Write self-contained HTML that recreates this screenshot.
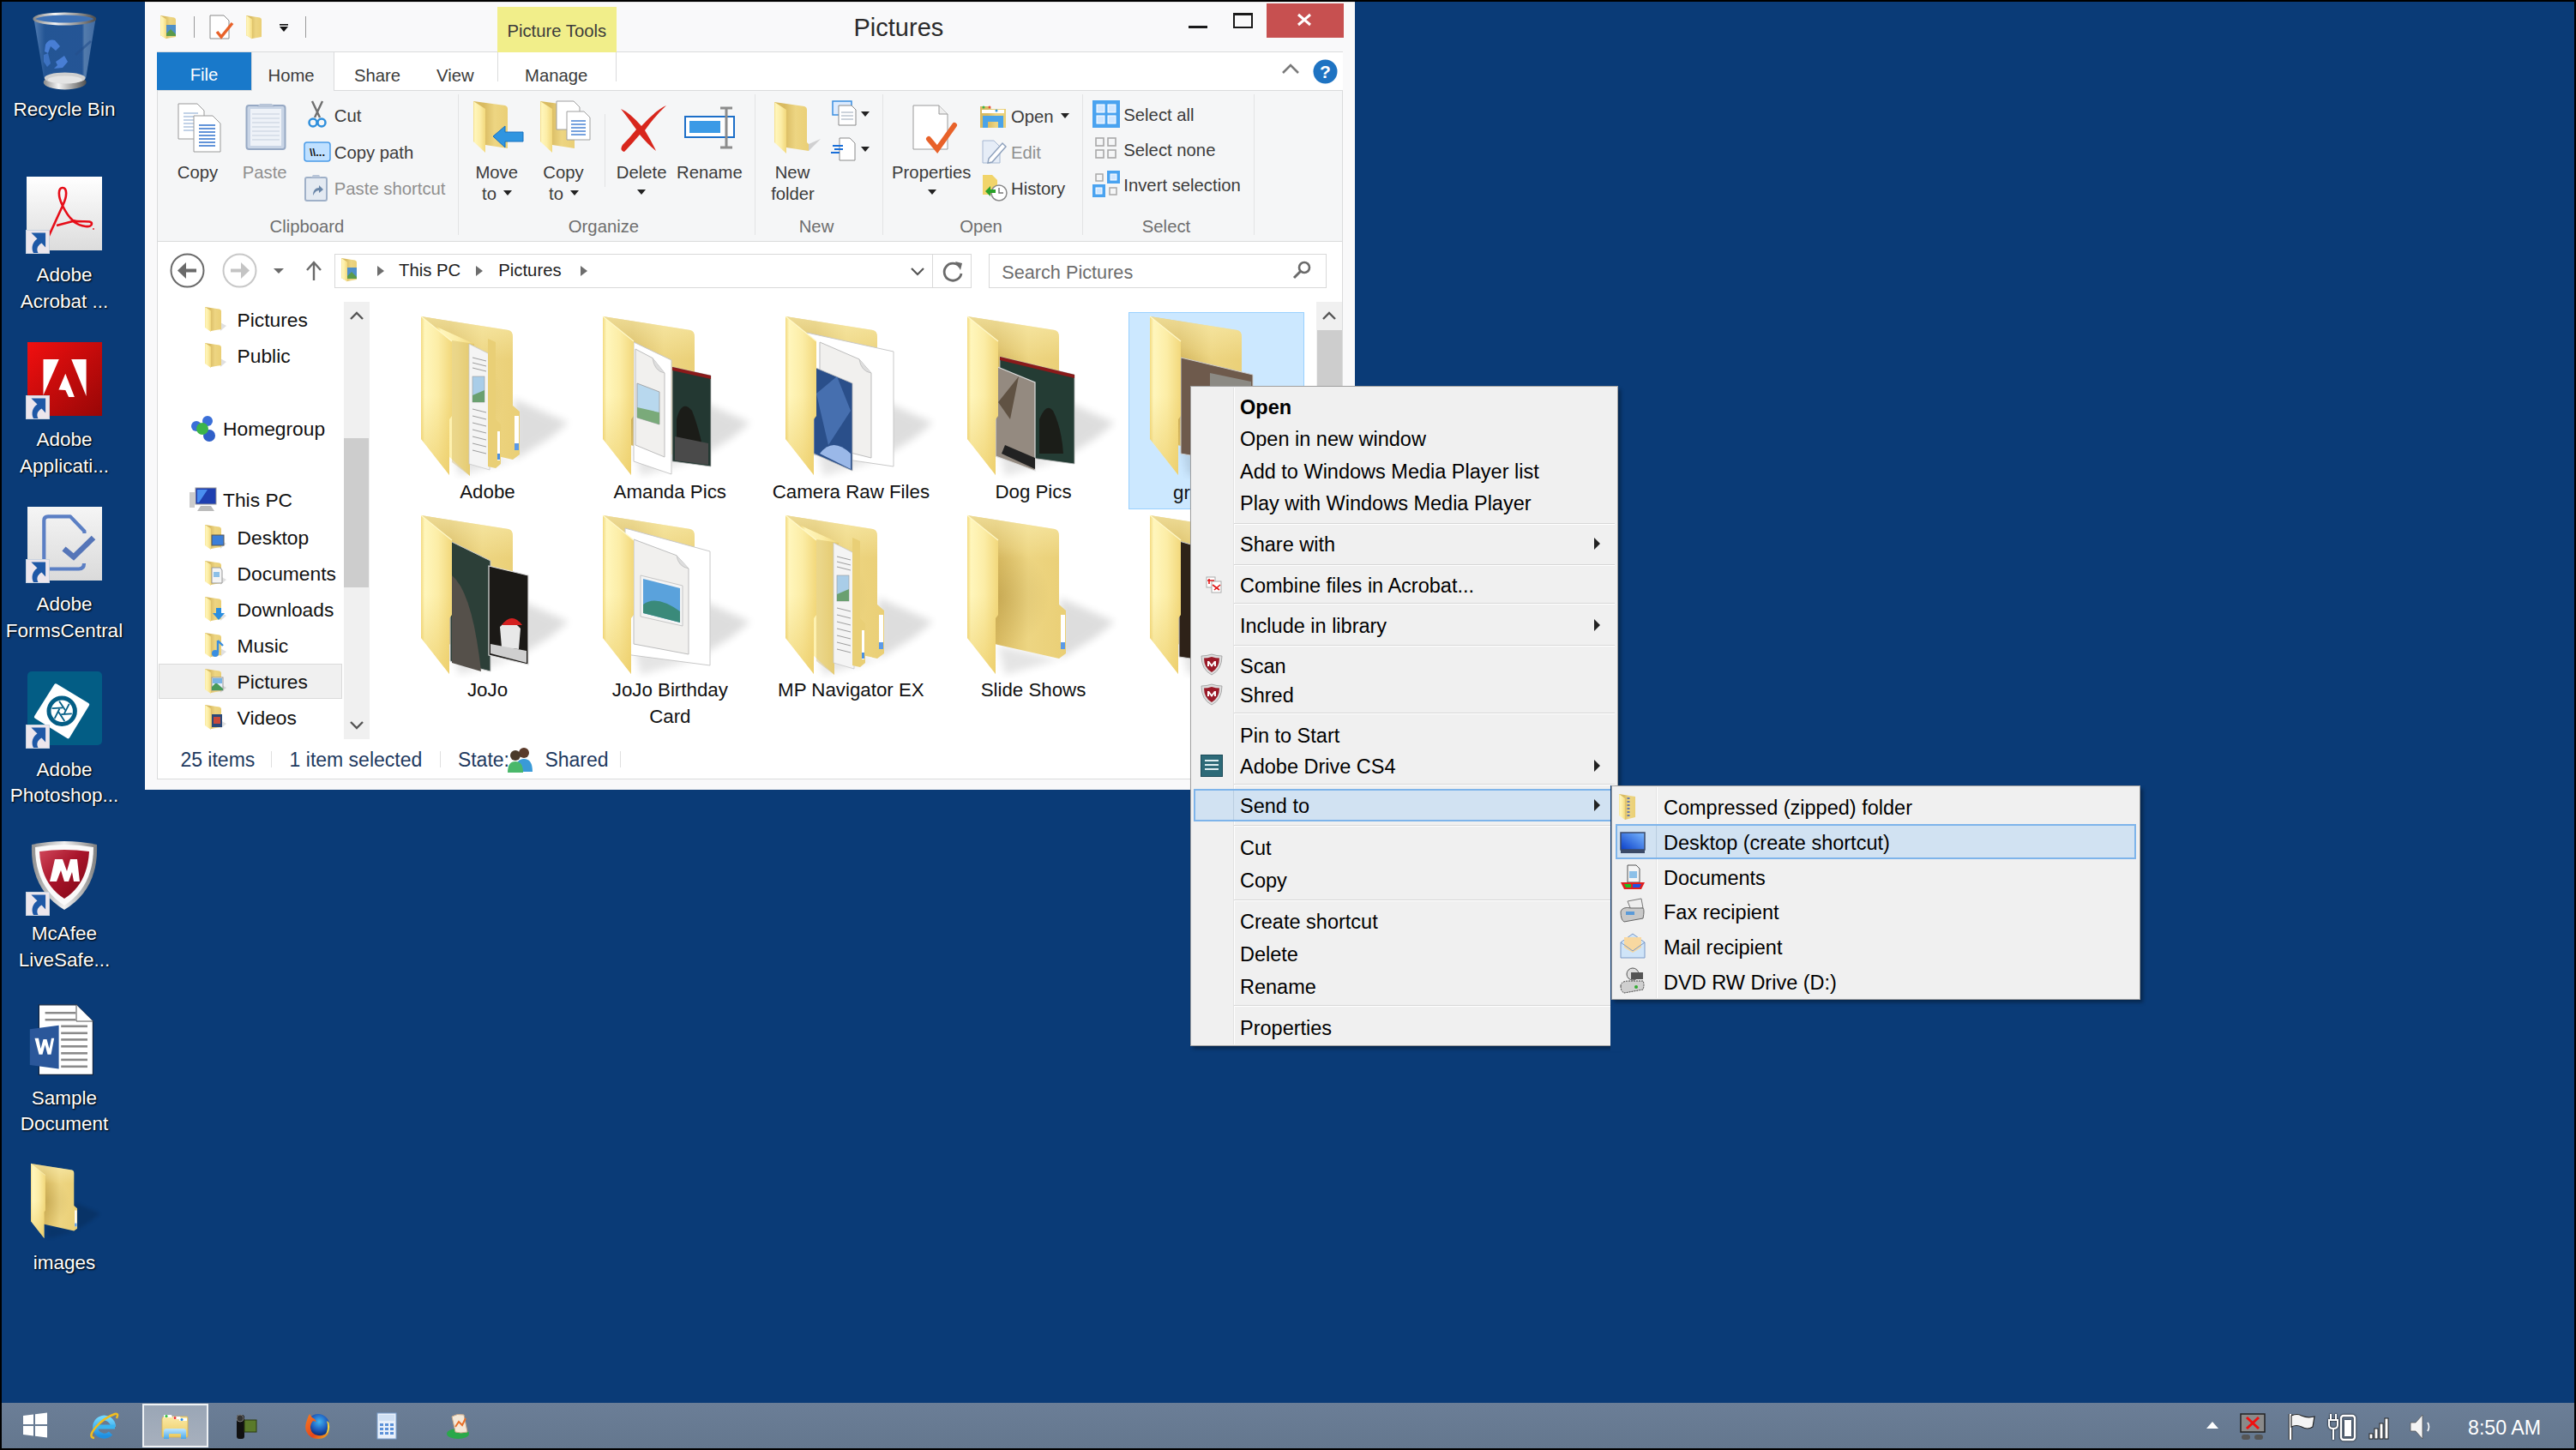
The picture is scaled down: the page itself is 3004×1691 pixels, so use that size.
<!DOCTYPE html>
<html><head><meta charset="utf-8"><style>
html,body{margin:0;padding:0;}
body{width:3004px;height:1691px;overflow:hidden;background:#000;position:relative;font-family:"Liberation Sans", sans-serif;}
div{position:absolute;box-sizing:border-box;}
.t{white-space:nowrap;}
svg{position:absolute;overflow:visible;}
</style></head><body>
<div class="" style="left:2px;top:2px;width:3000px;height:1634px;background:#0A3B77;"></div>
<svg style="left:37px;top:12px" width="78" height="96" viewBox="0 0 78 96">
<defs><linearGradient id="rbm" x1="0" x2="1"><stop offset="0" stop-color="#8a8a8a"/><stop offset=".35" stop-color="#f4f4f4"/><stop offset=".7" stop-color="#9a9a9a"/><stop offset="1" stop-color="#505050"/></linearGradient>
<linearGradient id="rbb" x1="0" x2="1"><stop offset="0" stop-color="#8fb6e6" stop-opacity=".55"/><stop offset=".18" stop-color="#3d6fb2" stop-opacity=".5"/><stop offset=".78" stop-color="#3a6aae" stop-opacity=".55"/><stop offset=".82" stop-color="#8fb0d8" stop-opacity=".55"/><stop offset="1" stop-color="#7a9ccc" stop-opacity=".5"/></linearGradient></defs>
<path d="M2.5 10 L14 78.4 Q38.5 86 63.3 78.4 L74.5 10 Z" fill="url(#rbb)"/>
<path d="M51 52 L69 36" stroke="#244f8c" stroke-width="3" opacity=".6"/>
<g fill="#4f86e0" opacity=".85"><path d="M16 40 Q20 33 27 35 L33 42 L28 47 L22 42 L19 50 L15 48Z"/><path d="M14 52 L19 50 L22 62 L18 66 L14 60Z" opacity=".7"/><path d="M28 60 L38 53 L42 60 L36 67 L26 68 L30 64Z"/></g>
<ellipse cx="38.7" cy="84" rx="25" ry="8.5" fill="url(#rbm)"/>
<ellipse cx="38.7" cy="79" rx="24" ry="6.5" fill="#cfcfcf"/>
<ellipse cx="38.7" cy="81" rx="20" ry="4.5" fill="#e4e4e4"/>
<ellipse cx="38.3" cy="10" rx="35.5" ry="6" fill="#3f72b6" stroke="url(#rbm)" stroke-width="3"/>
</svg>
<div class="t" style="top:116.66px;font-size:22.5px;line-height:22.5px;color:#fff;left:-225px;width:600px;text-align:center;text-shadow:1px 1px 2px #000,0 0 2px rgba(0,0,0,.6);">Recycle Bin</div>
<svg style="left:31px;top:206px" width="88" height="86" viewBox="0 0 88 86">
<defs><linearGradient id="acg" x1="0" y1="0" x2="0" y2="1"><stop offset="0" stop-color="#ffffff"/><stop offset="1" stop-color="#dcdcdc"/></linearGradient></defs>
<rect width="88" height="86" fill="url(#acg)"/>
<path d="M26 69 L42 34 C36 22 37 13 42 13 C47 13 48 22 42 34 C46 42 50 48 54 51 C62 54 76 50 76 55 C76 60 64 59 54 52 L35 57" fill="none" stroke="#E60D18" stroke-width="2.6" stroke-linejoin="round"/><circle cx="78" cy="61" r=".9" fill="#E60D18"/>
</svg>
<svg style="left:30px;top:268px" width="28" height="28" viewBox="0 0 28 28"><rect x="0.5" y="0.5" width="27" height="27" fill="#ECE6EC" stroke="#C9D3E0"/><path d="M6.4 3.4 L23.1 3.4 L23.1 20.5 L18.5 15.5 C13 19 12.5 23 14.5 27 L9 27 C6 21 8 14 13.5 10.5 Z" fill="#1E58A6"/></svg>
<div class="t" style="top:310.15px;font-size:22.5px;line-height:22.5px;color:#fff;left:-225px;width:600px;text-align:center;text-shadow:1px 1px 2px #000,0 0 2px rgba(0,0,0,.6);">Adobe</div>
<div class="t" style="top:341.15px;font-size:22.5px;line-height:22.5px;color:#fff;left:-225px;width:600px;text-align:center;text-shadow:1px 1px 2px #000,0 0 2px rgba(0,0,0,.6);">Acrobat ...</div>
<svg style="left:32px;top:399px" width="87" height="86" viewBox="0 0 87 86">
<defs><linearGradient id="aag" x1="0" y1="0" x2="1" y2="1"><stop offset="0" stop-color="#F20F0F"/><stop offset="1" stop-color="#970707"/></linearGradient></defs>
<rect width="87" height="86" fill="url(#aag)"/>
<path d="M18.5 20 L36.8 20 L18.5 62Z M51.2 20 L68.6 20 L68.6 63Z M44.3 36.8 L54.9 64 L48.1 64 L44.3 56 L36.4 55.5Z" fill="#fff"/>
</svg>
<svg style="left:30px;top:461px" width="28" height="28" viewBox="0 0 28 28"><rect x="0.5" y="0.5" width="27" height="27" fill="#ECE6EC" stroke="#C9D3E0"/><path d="M6.4 3.4 L23.1 3.4 L23.1 20.5 L18.5 15.5 C13 19 12.5 23 14.5 27 L9 27 C6 21 8 14 13.5 10.5 Z" fill="#1E58A6"/></svg>
<div class="t" style="top:502.15px;font-size:22.5px;line-height:22.5px;color:#fff;left:-225px;width:600px;text-align:center;text-shadow:1px 1px 2px #000,0 0 2px rgba(0,0,0,.6);">Adobe</div>
<div class="t" style="top:533.15px;font-size:22.5px;line-height:22.5px;color:#fff;left:-225px;width:600px;text-align:center;text-shadow:1px 1px 2px #000,0 0 2px rgba(0,0,0,.6);">Applicati...</div>
<svg style="left:32px;top:591px" width="87" height="86" viewBox="0 0 87 86">
<defs><linearGradient id="fcg" x1="0" y1="0" x2="0" y2="1"><stop offset="0" stop-color="#F5F5F5"/><stop offset="1" stop-color="#DADADA"/></linearGradient></defs>
<rect width="87" height="86" fill="url(#fcg)"/>
<path d="M66.4 31 L66.4 28.5 L50 11.4 L24 11.4 Q19.3 11.4 19.3 16 L19.3 72.5 L60 72.5 Q66 72.5 66 66" fill="none" stroke="#5B7FC4" stroke-width="4.2" stroke-linejoin="round"/>
<path d="M42.5 49 L53.9 58.5 L77 36" fill="none" stroke="#5575B8" stroke-width="6.5"/>
</svg>
<svg style="left:30px;top:652px" width="28" height="28" viewBox="0 0 28 28"><rect x="0.5" y="0.5" width="27" height="27" fill="#ECE6EC" stroke="#C9D3E0"/><path d="M6.4 3.4 L23.1 3.4 L23.1 20.5 L18.5 15.5 C13 19 12.5 23 14.5 27 L9 27 C6 21 8 14 13.5 10.5 Z" fill="#1E58A6"/></svg>
<div class="t" style="top:694.15px;font-size:22.5px;line-height:22.5px;color:#fff;left:-225px;width:600px;text-align:center;text-shadow:1px 1px 2px #000,0 0 2px rgba(0,0,0,.6);">Adobe</div>
<div class="t" style="top:725.15px;font-size:22.5px;line-height:22.5px;color:#fff;left:-225px;width:600px;text-align:center;text-shadow:1px 1px 2px #000,0 0 2px rgba(0,0,0,.6);">FormsCentral</div>
<svg style="left:32px;top:783px" width="87" height="86" viewBox="0 0 87 86">
<rect width="87" height="86" rx="5" fill="#035D85"/>
<path d="M33 16.3 L70.2 38.7 L47.4 76.3 L9.9 53.1 Z" fill="#fff" stroke="#fff" stroke-width="4" stroke-linejoin="round"/>
<circle cx="40.2" cy="46.3" r="15.2" fill="#fff" stroke="#035D85" stroke-width="5"/>
<g stroke="#035D85" stroke-width="1.8"><line x1="39.2" y1="50.2" x2="51.8" y2="49.4"/><line x1="36.3" y1="47.3" x2="43.3" y2="57.9"/><line x1="37.4" y1="43.5" x2="31.7" y2="54.8"/><line x1="41.2" y1="42.4" x2="28.6" y2="43.2"/><line x1="44.1" y1="45.3" x2="37.1" y2="34.7"/><line x1="43.0" y1="49.1" x2="48.7" y2="37.8"/></g>
</svg>
<svg style="left:30px;top:845px" width="28" height="28" viewBox="0 0 28 28"><rect x="0.5" y="0.5" width="27" height="27" fill="#ECE6EC" stroke="#C9D3E0"/><path d="M6.4 3.4 L23.1 3.4 L23.1 20.5 L18.5 15.5 C13 19 12.5 23 14.5 27 L9 27 C6 21 8 14 13.5 10.5 Z" fill="#1E58A6"/></svg>
<div class="t" style="top:887.15px;font-size:22.5px;line-height:22.5px;color:#fff;left:-225px;width:600px;text-align:center;text-shadow:1px 1px 2px #000,0 0 2px rgba(0,0,0,.6);">Adobe</div>
<div class="t" style="top:917.15px;font-size:22.5px;line-height:22.5px;color:#fff;left:-225px;width:600px;text-align:center;text-shadow:1px 1px 2px #000,0 0 2px rgba(0,0,0,.6);">Photoshop...</div>
<svg style="left:35px;top:979px" width="82" height="84" viewBox="0 0 82 84">
<defs><linearGradient id="mcs" x1="0" x2="1"><stop offset="0" stop-color="#8f8f8f"/><stop offset=".5" stop-color="#f0f0f0"/><stop offset="1" stop-color="#7f7f7f"/></linearGradient>
<linearGradient id="mcr" x1="0" y1="0" x2="1" y2="1"><stop offset="0" stop-color="#D0475A"/><stop offset=".45" stop-color="#A8142A"/><stop offset="1" stop-color="#7E0715"/></linearGradient></defs>
<path d="M2 6 Q40 -2 78 6 Q80 58 40 82 Q0 58 2 6Z" fill="url(#mcs)"/>
<path d="M6 9 Q40 3 74 9 Q74 55 40 77 Q6 55 6 9Z" fill="#fafafa"/>
<path d="M11 14 Q40 10 69 14 Q67 52 40 69 Q13 52 11 14Z" fill="url(#mcr)"/>
<path d="M23 49 L29 23 L38 23 L43 37 L47 23 L55 23 L58 49 L51 49 L49 38 L45 49 L40 49 L36 36 L31 49Z" fill="#fff"/>
</svg>
<svg style="left:30px;top:1040px" width="28" height="28" viewBox="0 0 28 28"><rect x="0.5" y="0.5" width="27" height="27" fill="#ECE6EC" stroke="#C9D3E0"/><path d="M6.4 3.4 L23.1 3.4 L23.1 20.5 L18.5 15.5 C13 19 12.5 23 14.5 27 L9 27 C6 21 8 14 13.5 10.5 Z" fill="#1E58A6"/></svg>
<div class="t" style="top:1078.15px;font-size:22.5px;line-height:22.5px;color:#fff;left:-225px;width:600px;text-align:center;text-shadow:1px 1px 2px #000,0 0 2px rgba(0,0,0,.6);">McAfee</div>
<div class="t" style="top:1109.15px;font-size:22.5px;line-height:22.5px;color:#fff;left:-225px;width:600px;text-align:center;text-shadow:1px 1px 2px #000,0 0 2px rgba(0,0,0,.6);">LiveSafe...</div>
<svg style="left:34px;top:1171px" width="76" height="84" viewBox="0 0 76 84">
<path d="M11.4 0.8 L55 0.8 L74.4 20 L74.4 82.3 L11.4 82.3Z" fill="#fff" stroke="#13243f" stroke-width="1.2"/>
<path d="M55 0.8 L55 20 L74.4 20" fill="#fff" stroke="#555" stroke-width="1"/>
<g stroke="#8a8a8a" stroke-width="2.6"><line x1="18.6" y1="10.2" x2="54.3" y2="10.2"/><line x1="18.6" y1="18.2" x2="54.3" y2="18.2"/><line x1="37.2" y1="25.8" x2="68" y2="25.8"/><line x1="37.2" y1="33.8" x2="68" y2="33.8"/><line x1="37.2" y1="41.4" x2="68" y2="41.4"/><line x1="37.2" y1="49.3" x2="68" y2="49.3"/><line x1="37.2" y1="57.3" x2="68" y2="57.3"/><line x1="37.2" y1="64.9" x2="68" y2="64.9"/><line x1="37.2" y1="72.8" x2="68" y2="72.8"/></g>
<path d="M0.8 29.2 L34.6 24.7 L34.6 75.5 L0.8 71Z" fill="#2B579A"/>
<path d="M6.5 39.8 L11 39.8 L13.5 52 L16.5 41 L20.5 41 L23.5 52 L26 39.8 L29.2 39.8 L25.5 58.8 L21.5 58.8 L18.5 47.5 L15.5 58.8 L11.5 58.8 Z" fill="#fff"/>
</svg>
<div class="t" style="top:1270.15px;font-size:22.5px;line-height:22.5px;color:#fff;left:-225px;width:600px;text-align:center;text-shadow:1px 1px 2px #000,0 0 2px rgba(0,0,0,.6);">Sample</div>
<div class="t" style="top:1300.15px;font-size:22.5px;line-height:22.5px;color:#fff;left:-225px;width:600px;text-align:center;text-shadow:1px 1px 2px #000,0 0 2px rgba(0,0,0,.6);">Document</div>
<div class="" style="left:169px;top:2px;width:1411px;height:919px;background:#F9F9FA;border-top:1px solid #E4E4E4;"></div>
<div class="" style="left:183px;top:60px;width:1383px;height:45px;background:#fff;border-top:1px solid #DADBDC;"></div>
<div class="" style="left:183px;top:105px;width:1383px;height:177px;background:#F5F6F7;border-top:1px solid #DADBDC;border-bottom:1px solid #DADBDC;border-left:1px solid #DADBDC;border-right:1px solid #DADBDC;"></div>
<div class="" style="left:183px;top:61px;width:110px;height:44px;background:#1979CA;"></div>
<div class="t" style="top:76.72px;font-size:20.3px;line-height:20.3px;color:#fff;left:-62px;width:600px;text-align:center;">File</div>
<div class="" style="left:293px;top:61px;width:97px;height:45px;background:#F5F6F7;border-left:1px solid #DADBDC;border-right:1px solid #DADBDC;"></div>
<div class="t" style="top:78.12px;font-size:20.3px;line-height:20.3px;color:#3B3B3B;left:39.60000000000002px;width:600px;text-align:center;">Home</div>
<div class="t" style="top:78.12px;font-size:20.3px;line-height:20.3px;color:#3B3B3B;left:413px;">Share</div>
<div class="t" style="top:78.12px;font-size:20.3px;line-height:20.3px;color:#3B3B3B;left:509px;">View</div>
<div class="" style="left:580px;top:8px;width:139px;height:53px;background:#F1EE8A;"></div>
<div class="t" style="top:25.92px;font-size:20.3px;line-height:20.3px;color:#3B3B3B;left:591.4px;">Picture Tools</div>
<div class="" style="left:580px;top:61px;width:1px;height:34px;background:#DADBDC;"></div>
<div class="" style="left:718px;top:61px;width:1px;height:34px;background:#DADBDC;"></div>
<div class="t" style="top:78.12px;font-size:20.3px;line-height:20.3px;color:#3B3B3B;left:612px;">Manage</div>
<div class="t" style="top:17.82px;font-size:29px;line-height:29px;color:#2B2B2B;left:995.5px;">Pictures</div>
<div class="" style="left:1386px;top:30px;width:22px;height:3px;background:#1a1a1a;"></div>
<div class="" style="left:1438px;top:15px;width:23px;height:18px;border:2px solid #1a1a1a;border-top-width:3px;"></div>
<div class="" style="left:1477px;top:4px;width:90px;height:40px;background:#C75050;"></div>
<svg style="left:1512px;top:16px" width="18" height="14" viewBox="0 0 18 14"><path d="M2 1 L16 13 M16 1 L2 13" stroke="#fff" stroke-width="3"/></svg>
<svg style="left:1495px;top:74px" width="20" height="12" viewBox="0 0 20 12"><path d="M1 11 L10 2 L19 11" stroke="#7a7a7a" stroke-width="2.6" fill="none"/></svg>
<svg style="left:1531px;top:69px" width="29" height="29" viewBox="0 0 29 29"><circle cx="14.5" cy="14.5" r="14" fill="#1E73C2"/><text x="14.5" y="22" font-family="Liberation Sans" font-weight="700" font-size="21" fill="#fff" text-anchor="middle">?</text></svg>
<svg style="left:185px;top:17px" width="22" height="29" viewBox="0 0 22 29"><path d="M2 1 L18 3.5 Q20 4 20 6 L20 26 L9 28 L2 24Z" fill="url(#fback)"/><path d="M2 1 L9 5.5 L9 28.5 L2 24Z" fill="url(#ffront)"/><rect x="9" y="12" width="11" height="13" fill="#4f8fc8"/><path d="M9 22 L14 17 L20 23 L20 25 L9 25Z" fill="#5a9a4a"/></svg>
<div class="" style="left:226px;top:19px;width:1px;height:25px;background:#9a9a9a;"></div>
<svg style="left:244px;top:17px" width="30" height="30" viewBox="0 0 30 30"><path d="M1 1 L17 1 L23 7 L23 28 L1 28Z" fill="#fff" stroke="#8a8a8a"/><path d="M9 20 L14 26 L27 10" stroke="#E8622A" stroke-width="3.5" fill="none"/></svg>
<svg style="left:285px;top:17px" width="22" height="29" viewBox="0 0 22 29"><path d="M2 1 L18 3.5 Q20 4 20 6 L20 26 L9 28 L2 24Z" fill="url(#fback)"/><path d="M2 1 L9 5.5 L9 28.5 L2 24Z" fill="url(#ffront)"/></svg>
<svg style="left:325px;top:28px" width="12" height="10" viewBox="0 0 12 10"><rect x="1" y="0" width="10" height="1.6" fill="#111"/><path d="M1 3 L11 3 L6 9Z" fill="#111"/></svg>
<div class="" style="left:356px;top:19px;width:1px;height:25px;background:#9a9a9a;"></div>
<div class="" style="left:534px;top:110px;width:1px;height:164px;background:#E2E3E4;"></div>
<div class="" style="left:880px;top:110px;width:1px;height:164px;background:#E2E3E4;"></div>
<div class="" style="left:1029px;top:110px;width:1px;height:164px;background:#E2E3E4;"></div>
<div class="" style="left:1262px;top:110px;width:1px;height:164px;background:#E2E3E4;"></div>
<div class="" style="left:1462px;top:110px;width:1px;height:164px;background:#E2E3E4;"></div>
<div class="t" style="top:253.82px;font-size:20.3px;line-height:20.3px;color:#6E6E6E;left:58px;width:600px;text-align:center;">Clipboard</div>
<div class="t" style="top:253.82px;font-size:20.3px;line-height:20.3px;color:#6E6E6E;left:404px;width:600px;text-align:center;">Organize</div>
<div class="t" style="top:253.82px;font-size:20.3px;line-height:20.3px;color:#6E6E6E;left:652px;width:600px;text-align:center;">New</div>
<div class="t" style="top:253.82px;font-size:20.3px;line-height:20.3px;color:#6E6E6E;left:844px;width:600px;text-align:center;">Open</div>
<div class="t" style="top:253.82px;font-size:20.3px;line-height:20.3px;color:#6E6E6E;left:1060px;width:600px;text-align:center;">Select</div>
<svg style="left:207px;top:120px" width="52" height="58" viewBox="0 0 52 58">
<path d="M1 1 L23 1 L31 9 L31 42 L1 42Z" fill="#fff" stroke="#9a9a9a"/>
<g stroke="#9ab4d8" stroke-width="1.2"><line x1="7" y1="12" x2="24" y2="12"/><line x1="7" y1="16" x2="24" y2="16"/><line x1="7" y1="20" x2="24" y2="20"/><line x1="7" y1="24" x2="24" y2="24"/><line x1="7" y1="28" x2="24" y2="28"/><line x1="7" y1="32" x2="24" y2="32"/></g>
<path d="M19 15 L41 15 L50 24 L50 57 L19 57Z" fill="#fff" stroke="#9a9a9a"/>
<g stroke="#3d7ad0" stroke-width="1.6"><line x1="25" y1="26" x2="44" y2="26"/><line x1="25" y1="30" x2="44" y2="30"/><line x1="25" y1="34" x2="44" y2="34"/><line x1="25" y1="38" x2="44" y2="38"/><line x1="25" y1="42" x2="44" y2="42"/><line x1="25" y1="46" x2="44" y2="46"/><line x1="25" y1="50" x2="44" y2="50"/></g>
</svg>
<div class="t" style="top:191.02px;font-size:20.3px;line-height:20.3px;color:#3B3B3B;left:-69.5px;width:600px;text-align:center;">Copy</div>
<svg style="left:286px;top:119px" width="48" height="57" viewBox="0 0 48 57">
<rect x="1.5" y="4" width="45" height="51" rx="3" fill="#c9d5e6" stroke="#97a9c4" stroke-width="2"/>
<rect x="6" y="8" width="36" height="43" fill="#eef2f8"/>
<g stroke="#c5cfdd" stroke-width="1"><line x1="8" y1="14" x2="40" y2="14"/><line x1="8" y1="19" x2="40" y2="19"/><line x1="8" y1="24" x2="40" y2="24"/><line x1="8" y1="29" x2="40" y2="29"/><line x1="8" y1="34" x2="40" y2="34"/><line x1="8" y1="39" x2="40" y2="39"/><line x1="8" y1="44" x2="40" y2="44"/></g>
<path d="M14 6 L34 6 L31 2 L17 2Z" fill="#b8c5d8"/>
</svg>
<div class="t" style="top:191.02px;font-size:20.3px;line-height:20.3px;color:#8F8F8F;left:8.699999999999989px;width:600px;text-align:center;">Paste</div>
<svg style="left:359px;top:118px" width="22" height="32" viewBox="0 0 22 32">
<path d="M5 0 L14 19 M17 0 L8 19" stroke="#6f6f6f" stroke-width="2.4"/>
<circle cx="6" cy="25" r="4.5" fill="none" stroke="#2f8fdc" stroke-width="2.5"/><circle cx="16" cy="25" r="4.5" fill="none" stroke="#2f8fdc" stroke-width="2.5"/>
</svg>
<div class="t" style="top:125.42px;font-size:20.3px;line-height:20.3px;color:#3B3B3B;left:389.8px;">Cut</div>
<svg style="left:354px;top:165px" width="32" height="24" viewBox="0 0 32 24">
<rect x="1" y="1" width="30" height="22" rx="3" fill="#bfe0ff" stroke="#4a9be8" stroke-width="1.5"/>
<text x="16" y="17" font-family="Liberation Sans" font-weight="700" font-size="13" fill="#111" text-anchor="middle">\\...</text>
</svg>
<div class="t" style="top:167.92px;font-size:20.3px;line-height:20.3px;color:#3B3B3B;left:389.8px;">Copy path</div>
<svg style="left:355px;top:204px" width="27" height="31" viewBox="0 0 27 31">
<rect x="1" y="3" width="25" height="27" rx="2" fill="#e4eaf2" stroke="#9fb0c8" stroke-width="2"/>
<path d="M8 3 L19 3 L17 0 L10 0Z" fill="#b8c5d8"/>
<path d="M10 24 C10 18 13 15 17 15 L17 12 L22 17 L17 21 L17 18 C14 18 12 20 10 24Z" fill="#6a86a8"/>
</svg>
<div class="t" style="top:210.42px;font-size:20.3px;line-height:20.3px;color:#8F8F8F;left:389.8px;">Paste shortcut</div>
<svg style="left:551px;top:117px" width="60" height="62" viewBox="0 0 60 62">
<path d="M1 1 L38 6 Q41 7 41 10 L41 56 L15 52Z" fill="url(#fback)"/><path d="M1 1 L15 10 L15 61 L1 48Z" fill="url(#ffront)"/>
<path d="M24 42 L38 30 L38 37 L59 37 L59 48 L38 48 L38 55Z" fill="#2F95E0" stroke="#1870c0" stroke-width="1"/>
</svg>
<div class="t" style="top:191.02px;font-size:20.3px;line-height:20.3px;color:#3B3B3B;left:279.20000000000005px;width:600px;text-align:center;">Move</div>
<div class="t" style="top:216.22px;font-size:20.3px;line-height:20.3px;color:#3B3B3B;left:270.5px;width:600px;text-align:center;">to</div>
<svg style="left:587px;top:222px" width="10" height="6" viewBox="0 0 10 6"><path d="M0 0 L10 0 L5 6Z" fill="#222"/></svg>
<svg style="left:629px;top:117px" width="62" height="62" viewBox="0 0 62 62">
<path d="M1 1 L38 6 Q41 7 41 10 L41 56 L15 52Z" fill="url(#fback)"/><path d="M1 1 L15 10 L15 61 L1 48Z" fill="url(#ffront)"/>
<path d="M20 1 L40 1 L47 8 L47 34 L20 34Z" fill="#fff" stroke="#a0a0a0"/>
<path d="M32 13 L52 13 L59 20 L59 46 L32 46Z" fill="#fff" stroke="#a0a0a0"/>
<g stroke="#3d7ad0" stroke-width="1.4"><line x1="37" y1="24" x2="54" y2="24"/><line x1="37" y1="28" x2="54" y2="28"/><line x1="37" y1="32" x2="54" y2="32"/><line x1="37" y1="36" x2="54" y2="36"/><line x1="37" y1="40" x2="54" y2="40"/></g>
</svg>
<div class="t" style="top:191.02px;font-size:20.3px;line-height:20.3px;color:#3B3B3B;left:357px;width:600px;text-align:center;">Copy</div>
<div class="t" style="top:216.22px;font-size:20.3px;line-height:20.3px;color:#3B3B3B;left:348.5px;width:600px;text-align:center;">to</div>
<svg style="left:665px;top:222px" width="10" height="6" viewBox="0 0 10 6"><path d="M0 0 L10 0 L5 6Z" fill="#222"/></svg>
<div class="" style="left:705px;top:133px;width:1px;height:85px;background:#E2E3E4;"></div>
<svg style="left:720px;top:121px" width="58" height="57" viewBox="0 0 58 57">
<path d="M4 6 Q14 10 28 26 Q44 8 57 2 Q44 14 32 31 Q40 44 45 55 Q36 48 26 36 Q14 50 8 56 Q2 54 6 48 Q14 40 22 30 Q12 16 4 6Z" fill="#d8261c"/>
</svg>
<div class="t" style="top:191.02px;font-size:20.3px;line-height:20.3px;color:#3B3B3B;left:448.20000000000005px;width:600px;text-align:center;">Delete</div>
<svg style="left:743px;top:221px" width="10" height="6" viewBox="0 0 10 6"><path d="M0 0 L10 0 L5 6Z" fill="#222"/></svg>
<svg style="left:798px;top:125px" width="60" height="48" viewBox="0 0 60 48">
<rect x="1" y="11" width="57" height="24" fill="#fff" stroke="#1d6fc8" stroke-width="2"/>
<rect x="6" y="16" width="36" height="14" fill="#3a9ae6"/>
<path d="M42 1 L56 1 M49 1 L49 47 M42 47 L56 47" stroke="#8c8c8c" stroke-width="3"/>
</svg>
<div class="t" style="top:191.02px;font-size:20.3px;line-height:20.3px;color:#3B3B3B;left:527.4px;width:600px;text-align:center;">Rename</div>
<svg style="left:902px;top:118px" width="56" height="62" viewBox="0 0 56 62">
<path d="M1 1 L36 6 Q39 7 39 10 L39 48 L41 50 L41 58 L15 54Z" fill="url(#fback)"/><path d="M1 1 L15 10 L15 61 L1 48Z" fill="url(#ffront)"/>
<path d="M41 50 L55 44 L41 58Z" fill="#999" opacity=".4"/>
</svg>
<div class="t" style="top:191.02px;font-size:20.3px;line-height:20.3px;color:#3B3B3B;left:624px;width:600px;text-align:center;">New</div>
<div class="t" style="top:216.22px;font-size:20.3px;line-height:20.3px;color:#3B3B3B;left:624.5px;width:600px;text-align:center;">folder</div>
<svg style="left:970px;top:117px" width="30" height="30" viewBox="0 0 30 30">
<rect x="1" y="1" width="22" height="16" fill="#dcebff" stroke="#3a8ee0" stroke-width="1.5"/>
<path d="M8 6 L23 6 L28 11 L28 29 L8 29Z" fill="#fff" stroke="#8a8a8a"/>
<g stroke="#9aa8b8"><line x1="11" y1="14" x2="25" y2="14"/><line x1="11" y1="18" x2="25" y2="18"/><line x1="11" y1="22" x2="25" y2="22"/></g>
</svg>
<svg style="left:1004px;top:130px" width="10" height="6" viewBox="0 0 10 6"><path d="M0 0 L10 0 L5 6Z" fill="#222"/></svg>
<svg style="left:969px;top:160px" width="30" height="28" viewBox="0 0 30 28">
<path d="M10 1 L22 1 L28 7 L28 27 L10 27Z" fill="#fff" stroke="#8a8a8a"/>
<path d="M2 10 L14 10 M4 14 L14 14 M0 18 L10 18" stroke="#1a6fd8" stroke-width="2"/>
</svg>
<svg style="left:1004px;top:171px" width="10" height="6" viewBox="0 0 10 6"><path d="M0 0 L10 0 L5 6Z" fill="#222"/></svg>
<svg style="left:1064px;top:122px" width="52" height="57" viewBox="0 0 52 57">
<path d="M1 1 L31 1 L41 11 L41 52 L1 52Z" fill="#fff" stroke="#9a9a9a"/><path d="M31 1 L31 11 L41 11" fill="#eee" stroke="#9a9a9a"/>
<path d="M19 40 L29 52 L49 24" stroke="#E8622A" stroke-width="6" fill="none" stroke-linecap="round"/>
</svg>
<div class="t" style="top:191.02px;font-size:20.3px;line-height:20.3px;color:#3B3B3B;left:786.3px;width:600px;text-align:center;">Properties</div>
<svg style="left:1082px;top:221px" width="10" height="6" viewBox="0 0 10 6"><path d="M0 0 L10 0 L5 6Z" fill="#222"/></svg>
<svg style="left:1142px;top:121px" width="32" height="30" viewBox="0 0 32 30">
<path d="M1 3 L12 3 L14 6 L31 6 L31 28 L1 28Z" fill="url(#fback)"/>
<rect x="3" y="7" width="26" height="4" fill="#fff"/>
<path d="M4 14 L28 14 L28 28 L22 28 L22 21 L10 21 L10 28 L4 28Z" fill="#4aa3e8"/>
<circle cx="5" cy="4" r="1.5" fill="#3bb54a"/><circle cx="12" cy="4" r="1.5" fill="#e74c3c"/><circle cx="20" cy="8" r="1.5" fill="#3498db"/>
</svg>
<div class="t" style="top:126.22px;font-size:20.3px;line-height:20.3px;color:#3B3B3B;left:1179px;">Open</div>
<svg style="left:1237px;top:132px" width="10" height="6" viewBox="0 0 10 6"><path d="M0 0 L10 0 L5 6Z" fill="#222"/></svg>
<svg style="left:1145px;top:163px" width="29" height="28" viewBox="0 0 29 28">
<path d="M1 1 L14 1 L21 8 L21 27 L1 27Z" fill="#e6edf7" stroke="#a6b8d2"/>
<path d="M8 22 L24 4 L28 8 L12 26 L7 27Z" fill="#fff" stroke="#8fa2bd" stroke-width="1.5"/>
</svg>
<div class="t" style="top:167.92px;font-size:20.3px;line-height:20.3px;color:#8F8F8F;left:1179px;">Edit</div>
<svg style="left:1145px;top:203px" width="30" height="32" viewBox="0 0 30 32">
<path d="M1 1 L12 1 L18 7 L18 24 L1 24Z" fill="#F1D46A"/>
<circle cx="20" cy="22" r="9" fill="#fff" stroke="#8a8a8a" stroke-width="1.5"/>
<path d="M20 16 L20 22 L25 22" stroke="#777" stroke-width="1.5" fill="none"/>
<path d="M4 20 L10 14 L10 18 L16 18 L16 22 L10 22 L10 26Z" fill="#2aa12a"/>
</svg>
<div class="t" style="top:210.42px;font-size:20.3px;line-height:20.3px;color:#3B3B3B;left:1179px;">History</div>
<svg style="left:1274px;top:117px" width="32" height="32" viewBox="0 0 32 32">
<rect width="32" height="32" fill="#4aa3f0"/>
<rect x="5" y="5" width="9" height="9" fill="#cfe6ff" stroke="#fff"/><rect x="18" y="5" width="9" height="9" fill="#cfe6ff" stroke="#fff"/>
<rect x="5" y="18" width="9" height="9" fill="#cfe6ff" stroke="#fff"/><rect x="18" y="18" width="9" height="9" fill="#cfe6ff" stroke="#fff"/>
</svg>
<div class="t" style="top:124.42px;font-size:20.3px;line-height:20.3px;color:#3B3B3B;left:1310.3px;">Select all</div>
<svg style="left:1277px;top:160px" width="27" height="27" viewBox="0 0 27 27" fill="none" stroke="#a8a8a8" stroke-width="1.6">
<rect x="1" y="1" width="9" height="9"/><rect x="15" y="1" width="9" height="9"/><rect x="1" y="15" width="9" height="9"/><rect x="15" y="15" width="9" height="9"/>
</svg>
<div class="t" style="top:165.02px;font-size:20.3px;line-height:20.3px;color:#3B3B3B;left:1310.3px;">Select none</div>
<svg style="left:1274px;top:199px" width="32" height="32" viewBox="0 0 32 32">
<rect x="17" y="0" width="15" height="15" fill="#4aa3f0"/><rect x="21" y="4" width="7" height="7" fill="#cfe6ff" stroke="#fff"/>
<rect x="0" y="16" width="15" height="15" fill="#4aa3f0"/><rect x="4" y="20" width="7" height="7" fill="#cfe6ff" stroke="#fff"/>
<rect x="4" y="4" width="8" height="8" fill="none" stroke="#a8a8a8" stroke-width="1.5"/><rect x="20" y="20" width="8" height="8" fill="none" stroke="#a8a8a8" stroke-width="1.5"/>
</svg>
<div class="t" style="top:205.62px;font-size:20.3px;line-height:20.3px;color:#3B3B3B;left:1310.3px;">Invert selection</div>
<div class="" style="left:183px;top:282px;width:1383px;height:70px;background:#fff;border-left:1px solid #DADBDC;border-right:1px solid #DADBDC;"></div>
<svg style="left:198px;top:295px" width="42" height="42" viewBox="0 0 42 42"><circle cx="20.5" cy="20.5" r="19" fill="none" stroke="#6a6a6a" stroke-width="2"/><path d="M13 20.5 L31 20.5" stroke="#6a6a6a" stroke-width="4"/><path d="M9 20.5 L19 11 L19 30Z" fill="#6a6a6a"/></svg>
<svg style="left:259px;top:295px" width="42" height="42" viewBox="0 0 42 42"><circle cx="20.5" cy="20.5" r="19" fill="none" stroke="#c8c8c8" stroke-width="2"/><path d="M10 20.5 L28 20.5" stroke="#c4c4c4" stroke-width="4"/><path d="M32 20.5 L22 11 L22 30Z" fill="#c4c4c4"/></svg>
<svg style="left:318px;top:312px" width="14" height="8" viewBox="0 0 14 8"><path d="M1 1 L13 1 L7 7Z" fill="#6a6a6a"/></svg>
<svg style="left:356px;top:304px" width="20" height="24" viewBox="0 0 20 24"><path d="M10 23 L10 3 M2 11 L10 2 L18 11" stroke="#6a6a6a" stroke-width="2.4" fill="none"/></svg>
<div class="" style="left:390px;top:296px;width:743px;height:40px;border:1px solid #D9D9D9;background:#fff;"></div>
<div class="" style="left:1087px;top:297px;width:1px;height:38px;background:#D9D9D9;"></div>
<svg style="left:396px;top:300px" width="22" height="29" viewBox="0 0 22 29"><path d="M2 1 L18 3.5 Q20 4 20 6 L20 26 L9 28 L2 24Z" fill="url(#fback)"/><path d="M2 1 L9 5.5 L9 28.5 L2 24Z" fill="url(#ffront)"/><rect x="9" y="12" width="11" height="13" fill="#4f8fc8"/><path d="M9 22 L14 17 L20 23 L20 25 L9 25Z" fill="#5a9a4a"/></svg>
<svg style="left:439px;top:309px" width="10" height="14" viewBox="0 0 10 14"><path d="M1 1 L9 7 L1 13Z" fill="#6d6d6d"/></svg>
<svg style="left:554px;top:309px" width="10" height="14" viewBox="0 0 10 14"><path d="M1 1 L9 7 L1 13Z" fill="#6d6d6d"/></svg>
<svg style="left:676px;top:309px" width="10" height="14" viewBox="0 0 10 14"><path d="M1 1 L9 7 L1 13Z" fill="#6d6d6d"/></svg>
<div class="t" style="top:305.42px;font-size:20.3px;line-height:20.3px;color:#1e1e1e;left:465px;">This PC</div>
<div class="t" style="top:305.42px;font-size:20.3px;line-height:20.3px;color:#1e1e1e;left:581.3px;">Pictures</div>
<svg style="left:1062px;top:312px" width="16" height="10" viewBox="0 0 16 10"><path d="M1 1 L8 8 L15 1" stroke="#555" stroke-width="2.2" fill="none"/></svg>
<svg style="left:1099px;top:303px" width="26" height="26" viewBox="0 0 26 26"><path d="M20 8 A10 10 0 1 0 22 16" stroke="#6a6a6a" stroke-width="2.8" fill="none"/><path d="M15 2 L23 4 L21 12Z" fill="#6a6a6a"/></svg>
<div class="" style="left:1153px;top:296px;width:394px;height:40px;border:1px solid #D9D9D9;background:#fff;"></div>
<div class="t" style="top:306.84px;font-size:21.7px;line-height:21.7px;color:#6D6D6D;left:1168.2px;">Search Pictures</div>
<svg style="left:1507px;top:304px" width="22" height="22" viewBox="0 0 22 22"><circle cx="14" cy="8" r="6" fill="none" stroke="#6a6a6a" stroke-width="2.6"/><path d="M10 12 L2 20" stroke="#6a6a6a" stroke-width="3"/></svg>
<div class="" style="left:183px;top:352px;width:1383px;height:557px;background:#fff;border-bottom:1px solid #DADBDC;border-left:1px solid #DADBDC;border-right:1px solid #DADBDC;"></div>
<svg style="left:238px;top:357px" width="26" height="31" viewBox="0 0 26 31"><path d="M19 19 L26 23 L19 29Z" fill="#000" opacity=".12"/><path d="M1 1 L18 3.5 Q20 4 20 6 L20 27 L8 29 L1 24Z" fill="url(#fback)"/><path d="M1 1 L8 5.5 L8 30 L1 25Z" fill="url(#ffront)"/></svg>
<div class="t" style="top:362.41px;font-size:22.8px;line-height:22.8px;color:#111;left:276.5px;">Pictures</div>
<svg style="left:238px;top:399px" width="26" height="31" viewBox="0 0 26 31"><path d="M19 19 L26 23 L19 29Z" fill="#000" opacity=".12"/><path d="M1 1 L18 3.5 Q20 4 20 6 L20 27 L8 29 L1 24Z" fill="url(#fback)"/><path d="M1 1 L8 5.5 L8 30 L1 25Z" fill="url(#ffront)"/></svg>
<div class="t" style="top:403.51px;font-size:22.8px;line-height:22.8px;color:#111;left:276.5px;">Public</div>
<svg style="left:220px;top:484px" width="34" height="32" viewBox="0 0 34 32">
<circle cx="9" cy="13" r="6" fill="#3a6fd8"/><circle cx="22" cy="7" r="6" fill="#3a6fd8"/><circle cx="24" cy="24" r="7" fill="#2f5fc8"/><circle cx="16" cy="16" r="7" fill="#3cb44a"/>
</svg>
<div class="t" style="top:489.41px;font-size:22.8px;line-height:22.8px;color:#111;left:260px;">Homegroup</div>
<svg style="left:220px;top:568px" width="34" height="30" viewBox="0 0 34 30">
<rect x="8" y="1" width="24" height="19" fill="#1f3fb0" stroke="#999"/><path d="M10 3 L22 3 L12 18 L10 18Z" fill="#4a8ef0"/>
<rect x="1" y="6" width="6" height="18" fill="#ccc"/><path d="M14 22 L26 22 L30 28 L10 28Z" fill="#bbb"/>
</svg>
<div class="t" style="top:572.21px;font-size:22.8px;line-height:22.8px;color:#111;left:260px;">This PC</div>
<svg style="left:238px;top:611px" width="26" height="31" viewBox="0 0 26 31"><path d="M19 19 L26 23 L19 29Z" fill="#000" opacity=".12"/><path d="M1 1 L18 3.5 Q20 4 20 6 L20 27 L8 29 L1 24Z" fill="url(#fback)"/><path d="M1 1 L8 5.5 L8 30 L1 25Z" fill="url(#ffront)"/><rect x="9" y="13" width="14" height="12" fill="#3c7fd8" stroke="#555"/></svg>
<div class="t" style="top:615.81px;font-size:22.8px;line-height:22.8px;color:#111;left:276.6px;">Desktop</div>
<svg style="left:238px;top:653px" width="26" height="31" viewBox="0 0 26 31"><path d="M19 19 L26 23 L19 29Z" fill="#000" opacity=".12"/><path d="M1 1 L18 3.5 Q20 4 20 6 L20 27 L8 29 L1 24Z" fill="url(#fback)"/><path d="M1 1 L8 5.5 L8 30 L1 25Z" fill="url(#ffront)"/><path d="M9 9 L19 9 L21 12 L21 27 L9 27Z" fill="#f4f4f4" stroke="#999"/><rect x="11" y="14" width="7" height="6" fill="#8cc0e8"/></svg>
<div class="t" style="top:657.71px;font-size:22.8px;line-height:22.8px;color:#111;left:276.6px;">Documents</div>
<svg style="left:238px;top:695px" width="26" height="31" viewBox="0 0 26 31"><path d="M19 19 L26 23 L19 29Z" fill="#000" opacity=".12"/><path d="M1 1 L18 3.5 Q20 4 20 6 L20 27 L8 29 L1 24Z" fill="url(#fback)"/><path d="M1 1 L8 5.5 L8 30 L1 25Z" fill="url(#ffront)"/><path d="M14 14 L20 14 L20 20 L24 20 L17 28 L10 20 L14 20Z" fill="#2a8ee0"/></svg>
<div class="t" style="top:699.71px;font-size:22.8px;line-height:22.8px;color:#111;left:276.6px;">Downloads</div>
<svg style="left:238px;top:737px" width="26" height="31" viewBox="0 0 26 31"><path d="M19 19 L26 23 L19 29Z" fill="#000" opacity=".12"/><path d="M1 1 L18 3.5 Q20 4 20 6 L20 27 L8 29 L1 24Z" fill="url(#fback)"/><path d="M1 1 L8 5.5 L8 30 L1 25Z" fill="url(#ffront)"/><path d="M16 10 L16 24 M16 10 L22 16" stroke="#3a8ee0" stroke-width="2.4" fill="none"/><circle cx="13" cy="25" r="4" fill="#3a8ee0"/></svg>
<div class="t" style="top:741.91px;font-size:22.8px;line-height:22.8px;color:#111;left:276.6px;">Music</div>
<div class="" style="left:185px;top:774px;width:214px;height:41px;background:#F0F0F0;border:1px solid #DADADA;"></div>
<svg style="left:238px;top:779px" width="26" height="31" viewBox="0 0 26 31"><path d="M19 19 L26 23 L19 29Z" fill="#000" opacity=".12"/><path d="M1 1 L18 3.5 Q20 4 20 6 L20 27 L8 29 L1 24Z" fill="url(#fback)"/><path d="M1 1 L8 5.5 L8 30 L1 25Z" fill="url(#ffront)"/><rect x="9" y="11" width="13" height="15" fill="#e8f0f8" stroke="#999"/><path d="M9 22 L14 17 L22 24 L22 26 L9 26Z" fill="#4a9a5a"/><rect x="10" y="12" width="11" height="6" fill="#7ab4e4"/></svg>
<div class="t" style="top:784.11px;font-size:22.8px;line-height:22.8px;color:#111;left:276.6px;">Pictures</div>
<svg style="left:238px;top:821px" width="26" height="31" viewBox="0 0 26 31"><path d="M19 19 L26 23 L19 29Z" fill="#000" opacity=".12"/><path d="M1 1 L18 3.5 Q20 4 20 6 L20 27 L8 29 L1 24Z" fill="url(#fback)"/><path d="M1 1 L8 5.5 L8 30 L1 25Z" fill="url(#ffront)"/><rect x="9" y="12" width="12" height="15" fill="#2a4a7a"/><rect x="11" y="15" width="8" height="8" fill="#c84a3a"/></svg>
<div class="t" style="top:826.11px;font-size:22.8px;line-height:22.8px;color:#111;left:276.6px;">Videos</div>
<div class="" style="left:401px;top:352px;width:30px;height:510px;background:#F0F0F0;"></div>
<div class="" style="left:401px;top:511px;width:29px;height:174px;background:#CDCDCD;"></div>
<svg style="left:408px;top:363px" width="16" height="10" viewBox="0 0 16 10"><path d="M1 9 L8 2 L15 9" stroke="#555" stroke-width="2.4" fill="none"/></svg>
<svg style="left:408px;top:841px" width="16" height="10" viewBox="0 0 16 10"><path d="M1 1 L8 8 L15 1" stroke="#555" stroke-width="2.4" fill="none"/></svg>
<div class="" style="left:1535px;top:352px;width:30px;height:510px;background:#F0F0F0;"></div>
<div class="" style="left:1536px;top:385px;width:29px;height:477px;background:#CDCDCD;"></div>
<svg style="left:1542px;top:363px" width="16" height="10" viewBox="0 0 16 10"><path d="M1 9 L8 2 L15 9" stroke="#555" stroke-width="2.4" fill="none"/></svg>
<svg width="0" height="0" style="position:absolute"><defs>
<linearGradient id="fback" x1="0" x2="1" y1="0" y2="0"><stop offset="0" stop-color="#D8BA60"/><stop offset=".3" stop-color="#D9BB62"/><stop offset=".62" stop-color="#EDD582"/><stop offset="1" stop-color="#EACF76"/></linearGradient>
<radialGradient id="fbsh" cx="36" cy="95" r="60" gradientUnits="userSpaceOnUse"><stop offset="0" stop-color="#7a5a10" stop-opacity=".18"/><stop offset="1" stop-color="#7a5a10" stop-opacity="0"/></radialGradient>
<linearGradient id="fbtop" x1="0" x2="0" y1="0" y2="1"><stop offset="0" stop-color="#fff6c0" stop-opacity=".55"/><stop offset=".3" stop-color="#fff6c0" stop-opacity="0"/></linearGradient>
<linearGradient id="ffront" x1="0" x2="1" y1="0" y2="0"><stop offset="0" stop-color="#F3DA80"/><stop offset=".12" stop-color="#FFF6BC"/><stop offset=".55" stop-color="#FCEDA6"/><stop offset="1" stop-color="#F2D87C"/></linearGradient>
<linearGradient id="ffbot" x1="0" x2="0" y1="0" y2="1"><stop offset=".5" stop-color="#E9C860" stop-opacity="0"/><stop offset="1" stop-color="#E9C860" stop-opacity=".6"/></linearGradient>
<linearGradient id="fshadow" x1="0" x2="1" y1="0" y2="0"><stop offset="0" stop-color="#000" stop-opacity=".28"/><stop offset="1" stop-color="#000" stop-opacity="0"/></linearGradient>
<filter id="blur4"><feGaussianBlur stdDeviation="5"/></filter>
</defs></svg>
<div class="" style="left:1316px;top:364px;width:205px;height:230px;background:#CCE8FF;border:1px solid #99D1FF;"></div>
<svg style="left:491px;top:369px" width="180.0" height="190.0" viewBox="0 0 180 190"><path d="M108 96 L172 124 L150 142 L108 168Z" fill="#000" opacity=".13" filter="url(#blur4)"/><path d="M36 152 L108 168 L44 186Z" fill="#000" opacity=".10" filter="url(#blur4)"/><path d="M0 0 L102 16 Q107 17 107 24 L107 104 L115 111 L115 161 L107 167 L36 151 L0 142Z" fill="url(#fback)"/><path d="M0 0 L102 16 Q107 17 107 24 L107 104 L115 111 L115 161 L107 167 L36 151 L0 142Z" fill="url(#fbsh)"/><path d="M0 0 L102 16 Q107 17 107 24 L107 104 L115 111 L115 161 L107 167 L36 151 L0 142Z" fill="url(#fbtop)"/><rect x="109" y="116" width="5" height="40" fill="#fff"/><rect x="109" y="148" width="5" height="8" fill="#5a9ae8"/><path d="M18 12 L62 32 L62 118 L57 122 L57 186 L18 150Z" fill="url(#ffront)"/><path d="M36 28 L62 32 L62 118 L57 122 L57 186 L36 170Z" fill="#C9A94E" opacity=".35"/><path d="M56 32 L80 44 L80 179 L56 172Z" fill="#f4f4f4" stroke="#c8c8c8" stroke-width="0.8"/><rect x="60" y="70" width="14" height="30" fill="#a9cde8" stroke="#999" stroke-width=".6"/><path d="M60 92 L74 86 L74 100 L60 100Z" fill="#6aa070"/><g stroke="#777" stroke-width=".7"><line x1="60" y1="48" x2="76" y2="52"/><line x1="60" y1="54" x2="76" y2="58"/><line x1="60" y1="60" x2="76" y2="64"/><line x1="60" y1="108" x2="76" y2="112"/><line x1="60" y1="116" x2="76" y2="120"/><line x1="60" y1="124" x2="76" y2="128"/><line x1="60" y1="132" x2="76" y2="136"/><line x1="60" y1="140" x2="76" y2="144"/><line x1="60" y1="148" x2="76" y2="152"/><line x1="60" y1="156" x2="76" y2="160"/></g><path d="M78 26 L87 30 L87 120 L93 126 L93 172 L87 177 L78 175Z" fill="#E9CF76"/><rect x="89" y="134" width="3" height="34" fill="#fff"/><rect x="89" y="160" width="3" height="7" fill="#4a90e2"/><path d="M0 0 L36 29 L36 116 L33 120 L33 185 L0 143Z" fill="url(#ffront)"/><path d="M0 0 L36 29 L36 116 L33 120 L33 185 L0 143Z" fill="url(#ffbot)"/><path d="M0 0 L36 29" stroke="#FFF8C8" stroke-width="1.2"/></svg>
<div class="t" style="top:563.05px;font-size:22.3px;line-height:22.3px;color:#111;left:268.5px;width:600px;text-align:center;">Adobe</div>
<svg style="left:703px;top:369px" width="180.0" height="190.0" viewBox="0 0 180 190"><path d="M108 96 L172 124 L150 142 L108 168Z" fill="#000" opacity=".13" filter="url(#blur4)"/><path d="M36 152 L108 168 L44 186Z" fill="#000" opacity=".10" filter="url(#blur4)"/><path d="M0 0 L102 16 Q107 17 107 24 L107 104 L115 111 L115 161 L107 167 L36 151 L0 142Z" fill="url(#fback)"/><path d="M0 0 L102 16 Q107 17 107 24 L107 104 L115 111 L115 161 L107 167 L36 151 L0 142Z" fill="url(#fbsh)"/><path d="M0 0 L102 16 Q107 17 107 24 L107 104 L115 111 L115 161 L107 167 L36 151 L0 142Z" fill="url(#fbtop)"/><rect x="109" y="116" width="5" height="40" fill="#fff"/><rect x="109" y="148" width="5" height="8" fill="#5a9ae8"/><path d="M36 30 L80 51 L80 184 L36 169Z" fill="#fff" stroke="#c8c8c8" stroke-width="1"/><path d="M38 38 L58 48.588235294117645 L72 66 L72 164 L38 150Z" fill="#f1f0ee" stroke="#bdbdbd" stroke-width="1"/><path d="M58 48.588235294117645 Q60 64 72 66" fill="#ddd" stroke="#bbb" stroke-width=".8"/><path d="M40 78 L66 88 L66 126 L40 118Z" fill="#b8d8ee" stroke="#999" stroke-width="0.8"/><path d="M40 106 L66 112 L66 126 L40 118Z" fill="#7aaa7a" stroke="none" stroke-width="0"/><path d="M81 59 L126 69 L126 175 L81 169Z" fill="#233832" stroke="#bbb" stroke-width="0.8"/><path d="M81 59 L126 69 L126 73 L81 63Z" fill="#8a1a1a" stroke="none" stroke-width="0"/><path d="M86 120 Q92 96 104 110 Q112 130 118 160 L118 170 L86 165Z" fill="#1a1814" opacity=".85"/><path d="M84 140 L123 148 L123 173 L84 168Z" fill="#4a4a4a" stroke="none" stroke-width="0"/><path d="M0 0 L36 29 L36 116 L33 120 L33 185 L0 143Z" fill="url(#ffront)"/><path d="M0 0 L36 29 L36 116 L33 120 L33 185 L0 143Z" fill="url(#ffbot)"/><path d="M0 0 L36 29" stroke="#FFF8C8" stroke-width="1.2"/></svg>
<div class="t" style="top:563.05px;font-size:22.3px;line-height:22.3px;color:#111;left:481.29999999999995px;width:600px;text-align:center;">Amanda Pics</div>
<svg style="left:916px;top:369px" width="180.0" height="190.0" viewBox="0 0 180 190"><path d="M108 96 L172 124 L150 142 L108 168Z" fill="#000" opacity=".13" filter="url(#blur4)"/><path d="M36 152 L108 168 L44 186Z" fill="#000" opacity=".10" filter="url(#blur4)"/><path d="M0 0 L102 16 Q107 17 107 24 L107 104 L115 111 L115 161 L107 167 L36 151 L0 142Z" fill="url(#fback)"/><path d="M0 0 L102 16 Q107 17 107 24 L107 104 L115 111 L115 161 L107 167 L36 151 L0 142Z" fill="url(#fbsh)"/><path d="M0 0 L102 16 Q107 17 107 24 L107 104 L115 111 L115 161 L107 167 L36 151 L0 142Z" fill="url(#fbtop)"/><rect x="109" y="116" width="5" height="40" fill="#fff"/><rect x="109" y="148" width="5" height="8" fill="#5a9ae8"/><path d="M25 19 L126 41 L126 175 L25 160Z" fill="#fff" stroke="#c8c8c8" stroke-width="1"/><path d="M40 30 L86 49.93333333333334 L100 66 L100 165 L40 150Z" fill="#f1f0ee" stroke="#bdbdbd" stroke-width="1"/><path d="M86 49.93333333333334 Q88 64 100 66" fill="#ddd" stroke="#bbb" stroke-width=".8"/><path d="M33 59 L78 78 L78 180 L33 160Z" fill="#2a4f8a" stroke="#bbb" stroke-width="0.8"/><path d="M36 90 L60 70 L76 110 L50 150Z" fill="#5a86c8" opacity=".6"/><path d="M40 160 Q55 140 76 160 L76 178 L40 160Z" fill="#9ab8e8"/><path d="M0 0 L36 29 L36 116 L33 120 L33 185 L0 143Z" fill="url(#ffront)"/><path d="M0 0 L36 29 L36 116 L33 120 L33 185 L0 143Z" fill="url(#ffbot)"/><path d="M0 0 L36 29" stroke="#FFF8C8" stroke-width="1.2"/></svg>
<div class="t" style="top:563.05px;font-size:22.3px;line-height:22.3px;color:#111;left:692.4px;width:600px;text-align:center;">Camera Raw Files</div>
<svg style="left:1128px;top:369px" width="180.0" height="190.0" viewBox="0 0 180 190"><path d="M108 96 L172 124 L150 142 L108 168Z" fill="#000" opacity=".13" filter="url(#blur4)"/><path d="M36 152 L108 168 L44 186Z" fill="#000" opacity=".10" filter="url(#blur4)"/><path d="M0 0 L102 16 Q107 17 107 24 L107 104 L115 111 L115 161 L107 167 L36 151 L0 142Z" fill="url(#fback)"/><path d="M0 0 L102 16 Q107 17 107 24 L107 104 L115 111 L115 161 L107 167 L36 151 L0 142Z" fill="url(#fbsh)"/><path d="M0 0 L102 16 Q107 17 107 24 L107 104 L115 111 L115 161 L107 167 L36 151 L0 142Z" fill="url(#fbtop)"/><rect x="109" y="116" width="5" height="40" fill="#fff"/><rect x="109" y="148" width="5" height="8" fill="#5a9ae8"/><path d="M38 47 L125 68 L125 172 L38 160Z" fill="#243c34" stroke="#bbb" stroke-width="0.8"/><path d="M38 47 L125 68 L125 72 L38 51Z" fill="#8a1a1a" stroke="none" stroke-width="0"/><path d="M84 120 Q92 100 100 110 Q110 130 112 160 L84 160Z" fill="#1a1814" opacity=".85"/><path d="M33 58 L79 77 L79 180 L33 163Z" fill="#948a80" stroke="#ddd" stroke-width="1.2"/><path d="M36 100 Q52 80 60 70 L50 120 Z" fill="#4a3a2a" opacity=".7"/><path d="M44 150 L79 165 L79 178 L40 160Z" fill="#222"/><path d="M0 0 L36 29 L36 116 L33 120 L33 185 L0 143Z" fill="url(#ffront)"/><path d="M0 0 L36 29 L36 116 L33 120 L33 185 L0 143Z" fill="url(#ffbot)"/><path d="M0 0 L36 29" stroke="#FFF8C8" stroke-width="1.2"/></svg>
<div class="t" style="top:563.05px;font-size:22.3px;line-height:22.3px;color:#111;left:905px;width:600px;text-align:center;">Dog Pics</div>
<svg style="left:1341px;top:369px" width="180.0" height="190.0" viewBox="0 0 180 190"><path d="M108 96 L172 124 L150 142 L108 168Z" fill="#000" opacity=".13" filter="url(#blur4)"/><path d="M36 152 L108 168 L44 186Z" fill="#000" opacity=".10" filter="url(#blur4)"/><path d="M0 0 L102 16 Q107 17 107 24 L107 104 L115 111 L115 161 L107 167 L36 151 L0 142Z" fill="url(#fback)"/><path d="M0 0 L102 16 Q107 17 107 24 L107 104 L115 111 L115 161 L107 167 L36 151 L0 142Z" fill="url(#fbsh)"/><path d="M0 0 L102 16 Q107 17 107 24 L107 104 L115 111 L115 161 L107 167 L36 151 L0 142Z" fill="url(#fbtop)"/><rect x="109" y="116" width="5" height="40" fill="#fff"/><rect x="109" y="148" width="5" height="8" fill="#5a9ae8"/><path d="M36 48 L120 68 L120 175 L36 160Z" fill="#6e5a4c" stroke="#ccc" stroke-width="1"/><path d="M70 66 L118 76 L118 165 L70 150Z" fill="#8c8a84" stroke="none" stroke-width="0"/><path d="M0 0 L36 29 L36 116 L33 120 L33 185 L0 143Z" fill="url(#ffront)"/><path d="M0 0 L36 29 L36 116 L33 120 L33 185 L0 143Z" fill="url(#ffbot)"/><path d="M0 0 L36 29" stroke="#FFF8C8" stroke-width="1.2"/></svg>
<div class="t" style="top:563.75px;font-size:22.3px;line-height:22.3px;color:#111;left:1368px;">graphics</div>
<svg style="left:491px;top:601px" width="180.0" height="190.0" viewBox="0 0 180 190"><path d="M108 96 L172 124 L150 142 L108 168Z" fill="#000" opacity=".13" filter="url(#blur4)"/><path d="M36 152 L108 168 L44 186Z" fill="#000" opacity=".10" filter="url(#blur4)"/><path d="M0 0 L102 16 Q107 17 107 24 L107 104 L115 111 L115 161 L107 167 L36 151 L0 142Z" fill="url(#fback)"/><path d="M0 0 L102 16 Q107 17 107 24 L107 104 L115 111 L115 161 L107 167 L36 151 L0 142Z" fill="url(#fbsh)"/><path d="M0 0 L102 16 Q107 17 107 24 L107 104 L115 111 L115 161 L107 167 L36 151 L0 142Z" fill="url(#fbtop)"/><rect x="109" y="116" width="5" height="40" fill="#fff"/><rect x="109" y="148" width="5" height="8" fill="#5a9ae8"/><path d="M34 30 L81 53 L81 182 L34 170Z" fill="#2c3f38" stroke="#ccc" stroke-width="1"/><path d="M36 70 Q60 90 70 182 L36 172Z" fill="#55504a"/><path d="M79 59 L125 70 L125 174 L79 163Z" fill="#1b1916" stroke="#ddd" stroke-width="1.2"/><path d="M92 130 Q104 118 116 132 L114 156 L94 154Z" fill="#e8e8e8"/><path d="M94 128 Q106 112 118 128Z" fill="#d42020"/><path d="M81 150 L123 158 L123 172 L81 161Z" fill="#cfcfcf" stroke="none" stroke-width="0"/><path d="M0 0 L36 29 L36 116 L33 120 L33 185 L0 143Z" fill="url(#ffront)"/><path d="M0 0 L36 29 L36 116 L33 120 L33 185 L0 143Z" fill="url(#ffbot)"/><path d="M0 0 L36 29" stroke="#FFF8C8" stroke-width="1.2"/></svg>
<div class="t" style="top:794.45px;font-size:22.3px;line-height:22.3px;color:#111;left:268.5px;width:600px;text-align:center;">JoJo</div>
<svg style="left:703px;top:601px" width="180.0" height="190.0" viewBox="0 0 180 190"><path d="M108 96 L172 124 L150 142 L108 168Z" fill="#000" opacity=".13" filter="url(#blur4)"/><path d="M36 152 L108 168 L44 186Z" fill="#000" opacity=".10" filter="url(#blur4)"/><path d="M0 0 L102 16 Q107 17 107 24 L107 104 L115 111 L115 161 L107 167 L36 151 L0 142Z" fill="url(#fback)"/><path d="M0 0 L102 16 Q107 17 107 24 L107 104 L115 111 L115 161 L107 167 L36 151 L0 142Z" fill="url(#fbsh)"/><path d="M0 0 L102 16 Q107 17 107 24 L107 104 L115 111 L115 161 L107 167 L36 151 L0 142Z" fill="url(#fbtop)"/><rect x="109" y="116" width="5" height="40" fill="#fff"/><rect x="109" y="148" width="5" height="8" fill="#5a9ae8"/><path d="M26 15 L125 42 L125 175 L26 162Z" fill="#fff" stroke="#c8c8c8" stroke-width="1"/><path d="M36 28 L86 46.75 L100 62 L100 162 L36 150Z" fill="#f1f0ee" stroke="#bdbdbd" stroke-width="1"/><path d="M86 46.75 Q88 60 100 62" fill="#ddd" stroke="#bbb" stroke-width=".8"/><path d="M44 70 L93 82 L93 129 L44 118Z" fill="#f4f4f4" stroke="#bbb" stroke-width="0.8"/><path d="M47 74 L90 85 L90 125 L47 114Z" fill="#5aa2dc" stroke="none" stroke-width="0"/><path d="M47 104 Q62 92 90 112 L90 125 L47 114Z" fill="#3a8a7a"/><path d="M0 0 L36 29 L36 116 L33 120 L33 185 L0 143Z" fill="url(#ffront)"/><path d="M0 0 L36 29 L36 116 L33 120 L33 185 L0 143Z" fill="url(#ffbot)"/><path d="M0 0 L36 29" stroke="#FFF8C8" stroke-width="1.2"/></svg>
<div class="t" style="top:794.45px;font-size:22.3px;line-height:22.3px;color:#111;left:481.29999999999995px;width:600px;text-align:center;">JoJo Birthday</div>
<div class="t" style="top:824.85px;font-size:22.3px;line-height:22.3px;color:#111;left:481.29999999999995px;width:600px;text-align:center;">Card</div>
<svg style="left:916px;top:601px" width="180.0" height="190.0" viewBox="0 0 180 190"><path d="M108 96 L172 124 L150 142 L108 168Z" fill="#000" opacity=".13" filter="url(#blur4)"/><path d="M36 152 L108 168 L44 186Z" fill="#000" opacity=".10" filter="url(#blur4)"/><path d="M0 0 L102 16 Q107 17 107 24 L107 104 L115 111 L115 161 L107 167 L36 151 L0 142Z" fill="url(#fback)"/><path d="M0 0 L102 16 Q107 17 107 24 L107 104 L115 111 L115 161 L107 167 L36 151 L0 142Z" fill="url(#fbsh)"/><path d="M0 0 L102 16 Q107 17 107 24 L107 104 L115 111 L115 161 L107 167 L36 151 L0 142Z" fill="url(#fbtop)"/><rect x="109" y="116" width="5" height="40" fill="#fff"/><rect x="109" y="148" width="5" height="8" fill="#5a9ae8"/><path d="M18 12 L62 32 L62 118 L57 122 L57 186 L18 150Z" fill="url(#ffront)"/><path d="M36 28 L62 32 L62 118 L57 122 L57 186 L36 170Z" fill="#C9A94E" opacity=".35"/><path d="M56 32 L80 44 L80 179 L56 172Z" fill="#f4f4f4" stroke="#c8c8c8" stroke-width="0.8"/><rect x="60" y="70" width="14" height="30" fill="#a9cde8" stroke="#999" stroke-width=".6"/><path d="M60 92 L74 86 L74 100 L60 100Z" fill="#6aa070"/><g stroke="#777" stroke-width=".7"><line x1="60" y1="48" x2="76" y2="52"/><line x1="60" y1="54" x2="76" y2="58"/><line x1="60" y1="60" x2="76" y2="64"/><line x1="60" y1="108" x2="76" y2="112"/><line x1="60" y1="116" x2="76" y2="120"/><line x1="60" y1="124" x2="76" y2="128"/><line x1="60" y1="132" x2="76" y2="136"/><line x1="60" y1="140" x2="76" y2="144"/><line x1="60" y1="148" x2="76" y2="152"/><line x1="60" y1="156" x2="76" y2="160"/></g><path d="M78 26 L87 30 L87 120 L93 126 L93 172 L87 177 L78 175Z" fill="#E9CF76"/><rect x="89" y="134" width="3" height="34" fill="#fff"/><rect x="89" y="160" width="3" height="7" fill="#4a90e2"/><path d="M0 0 L36 29 L36 116 L33 120 L33 185 L0 143Z" fill="url(#ffront)"/><path d="M0 0 L36 29 L36 116 L33 120 L33 185 L0 143Z" fill="url(#ffbot)"/><path d="M0 0 L36 29" stroke="#FFF8C8" stroke-width="1.2"/></svg>
<div class="t" style="top:794.45px;font-size:22.3px;line-height:22.3px;color:#111;left:692.4px;width:600px;text-align:center;">MP Navigator EX</div>
<svg style="left:1128px;top:601px" width="180.0" height="190.0" viewBox="0 0 180 190"><path d="M108 96 L172 124 L150 142 L108 168Z" fill="#000" opacity=".13" filter="url(#blur4)"/><path d="M36 152 L108 168 L44 186Z" fill="#000" opacity=".10" filter="url(#blur4)"/><path d="M0 0 L102 16 Q107 17 107 24 L107 104 L115 111 L115 161 L107 167 L36 151 L0 142Z" fill="url(#fback)"/><path d="M0 0 L102 16 Q107 17 107 24 L107 104 L115 111 L115 161 L107 167 L36 151 L0 142Z" fill="url(#fbsh)"/><path d="M0 0 L102 16 Q107 17 107 24 L107 104 L115 111 L115 161 L107 167 L36 151 L0 142Z" fill="url(#fbtop)"/><rect x="109" y="116" width="5" height="40" fill="#fff"/><rect x="109" y="148" width="5" height="8" fill="#5a9ae8"/><path d="M0 0 L36 29 L36 116 L33 120 L33 185 L0 143Z" fill="url(#ffront)"/><path d="M0 0 L36 29 L36 116 L33 120 L33 185 L0 143Z" fill="url(#ffbot)"/><path d="M0 0 L36 29" stroke="#FFF8C8" stroke-width="1.2"/></svg>
<div class="t" style="top:794.45px;font-size:22.3px;line-height:22.3px;color:#111;left:905px;width:600px;text-align:center;">Slide Shows</div>
<svg style="left:1341px;top:601px" width="180.0" height="190.0" viewBox="0 0 180 190"><path d="M108 96 L172 124 L150 142 L108 168Z" fill="#000" opacity=".13" filter="url(#blur4)"/><path d="M36 152 L108 168 L44 186Z" fill="#000" opacity=".10" filter="url(#blur4)"/><path d="M0 0 L102 16 Q107 17 107 24 L107 104 L115 111 L115 161 L107 167 L36 151 L0 142Z" fill="url(#fback)"/><path d="M0 0 L102 16 Q107 17 107 24 L107 104 L115 111 L115 161 L107 167 L36 151 L0 142Z" fill="url(#fbsh)"/><path d="M0 0 L102 16 Q107 17 107 24 L107 104 L115 111 L115 161 L107 167 L36 151 L0 142Z" fill="url(#fbtop)"/><rect x="109" y="116" width="5" height="40" fill="#fff"/><rect x="109" y="148" width="5" height="8" fill="#5a9ae8"/><path d="M34 30 L120 55 L120 178 L34 165Z" fill="#2e2218" stroke="#ccc" stroke-width="1"/><path d="M60 60 L110 70 L110 150 L60 140Z" fill="#6a4a30" stroke="none" stroke-width="0"/><path d="M0 0 L36 29 L36 116 L33 120 L33 185 L0 143Z" fill="url(#ffront)"/><path d="M0 0 L36 29 L36 116 L33 120 L33 185 L0 143Z" fill="url(#ffbot)"/><path d="M0 0 L36 29" stroke="#FFF8C8" stroke-width="1.2"/></svg>
<div class="t" style="top:874.91px;font-size:23px;line-height:23px;color:#1E3A5F;left:210.4px;">25 items</div>
<div class="" style="left:316px;top:876px;width:1px;height:19px;background:#E0E0E0;"></div>
<div class="t" style="top:874.91px;font-size:23px;line-height:23px;color:#1E3A5F;left:337.6px;">1 item selected</div>
<div class="" style="left:513px;top:876px;width:1px;height:19px;background:#E0E0E0;"></div>
<div class="t" style="top:874.91px;font-size:23px;line-height:23px;color:#1E3A5F;left:533.9px;">State:</div>
<svg style="left:591px;top:871px" width="34" height="30" viewBox="0 0 34 30">
<circle cx="20" cy="7" r="6" fill="#5a3a2a"/><path d="M10 29 Q10 14 20 14 Q30 14 30 29Z" fill="#3a9ad8"/>
<circle cx="10" cy="10" r="6" fill="#4a3a2a"/><path d="M1 30 Q1 17 10 17 Q19 17 19 30Z" fill="#4ab86a"/>
</svg>
<div class="t" style="top:874.91px;font-size:23px;line-height:23px;color:#1E3A5F;left:635.4px;">Shared</div>
<div class="" style="left:723px;top:876px;width:1px;height:19px;background:#E0E0E0;"></div>
<div class="" style="left:1391px;top:454px;width:499px;height:769px;background:rgba(0,0,0,.35);filter:blur(2px);"></div>
<div class="" style="left:1388px;top:450px;width:499px;height:770px;background:#F0F0F0;border:1px solid #A0A0A0;"></div>
<div class="" style="left:1438px;top:452px;width:1px;height:766px;background:#E2E2E2;border-right:1px solid #fff;width:2px;"></div>
<div class="t" style="top:463.67px;font-size:23.5px;line-height:23.5px;color:#000;font-weight:700;left:1446px;">Open</div>
<div class="t" style="top:501.27px;font-size:23.5px;line-height:23.5px;color:#000;left:1446px;">Open in new window</div>
<div class="t" style="top:538.67px;font-size:23.5px;line-height:23.5px;color:#000;left:1446px;">Add to Windows Media Player list</div>
<div class="t" style="top:576.27px;font-size:23.5px;line-height:23.5px;color:#000;left:1446px;">Play with Windows Media Player</div>
<div class="" style="left:1439px;top:610px;width:444px;height:2px;background:#D7D7D7;border-bottom:1px solid #fff;"></div>
<div class="t" style="top:624.17px;font-size:23.5px;line-height:23.5px;color:#000;left:1446px;">Share with</div>
<svg style="left:1858px;top:627px" width="9" height="14" viewBox="0 0 9 14"><path d="M1 0 L8 7 L1 14Z" fill="#222"/></svg>
<div class="" style="left:1439px;top:658px;width:444px;height:2px;background:#D7D7D7;border-bottom:1px solid #fff;"></div>
<svg style="left:1406px;top:672px" width="20" height="20" viewBox="0 0 20 20">
<rect x="1" y="1" width="10" height="12" fill="#fff" stroke="#aaa"/><rect x="7" y="6" width="11" height="13" fill="#fff" stroke="#aaa"/>
<path d="M2 5 L10 5 M4 3 L4 9 M8 10 L16 16 M10 16 L17 10" stroke="#e01818" stroke-width="1.6"/></svg>
<div class="t" style="top:671.67px;font-size:23.5px;line-height:23.5px;color:#000;left:1446px;">Combine files in Acrobat...</div>
<div class="" style="left:1439px;top:703px;width:444px;height:2px;background:#D7D7D7;border-bottom:1px solid #fff;"></div>
<div class="t" style="top:719.17px;font-size:23.5px;line-height:23.5px;color:#000;left:1446px;">Include in library</div>
<svg style="left:1858px;top:722px" width="9" height="14" viewBox="0 0 9 14"><path d="M1 0 L8 7 L1 14Z" fill="#222"/></svg>
<div class="" style="left:1439px;top:752px;width:444px;height:2px;background:#D7D7D7;border-bottom:1px solid #fff;"></div>
<svg style="left:1400px;top:762px" width="26" height="26" viewBox="0 0 26 26">
<path d="M13 1 Q19 3 25 3 Q25 19 13 25 Q1 19 1 3 Q7 3 13 1Z" fill="#ddd" stroke="#999" stroke-width=".8"/>
<path d="M13 4 Q18 5.5 22 5.5 Q22 17 13 22 Q4 17 4 5.5 Q8 5.5 13 4Z" fill="#9a1a28"/>
<path d="M8 15 L8 9 L10 9 L13 13 L16 9 L18 9 L18 15 L16 15 L16 12 L13 16 L10 12 L10 15Z" fill="#fff"/></svg>
<div class="t" style="top:765.97px;font-size:23.5px;line-height:23.5px;color:#000;left:1446px;">Scan</div>
<svg style="left:1400px;top:797px" width="26" height="26" viewBox="0 0 26 26">
<path d="M13 1 Q19 3 25 3 Q25 19 13 25 Q1 19 1 3 Q7 3 13 1Z" fill="#ddd" stroke="#999" stroke-width=".8"/>
<path d="M13 4 Q18 5.5 22 5.5 Q22 17 13 22 Q4 17 4 5.5 Q8 5.5 13 4Z" fill="#9a1a28"/>
<path d="M8 15 L8 9 L10 9 L13 13 L16 9 L18 9 L18 15 L16 15 L16 12 L13 16 L10 12 L10 15Z" fill="#fff"/></svg>
<div class="t" style="top:799.97px;font-size:23.5px;line-height:23.5px;color:#000;left:1446px;">Shred</div>
<div class="" style="left:1439px;top:831px;width:444px;height:2px;background:#D7D7D7;border-bottom:1px solid #fff;"></div>
<div class="t" style="top:846.87px;font-size:23.5px;line-height:23.5px;color:#000;left:1446px;">Pin to Start</div>
<svg style="left:1400px;top:880px" width="26" height="26" viewBox="0 0 26 26">
<rect x="0.5" y="0.5" width="25" height="25" fill="#2d6a78" stroke="#1a4a58"/>
<g stroke="#dfeff2" stroke-width="2"><line x1="5" y1="7" x2="21" y2="7"/><line x1="5" y1="12" x2="21" y2="12"/><line x1="5" y1="17" x2="21" y2="17"/></g></svg>
<div class="t" style="top:882.57px;font-size:23.5px;line-height:23.5px;color:#000;left:1446px;">Adobe Drive CS4</div>
<svg style="left:1858px;top:886px" width="9" height="14" viewBox="0 0 9 14"><path d="M1 0 L8 7 L1 14Z" fill="#222"/></svg>
<div class="" style="left:1439px;top:914px;width:444px;height:2px;background:#D7D7D7;border-bottom:1px solid #fff;"></div>
<div class="" style="left:1392px;top:920px;width:500px;height:38px;background:#D1E2F2;border:2px solid #7EB4EA;"></div>
<div class="" style="left:1438px;top:922px;width:1px;height:34px;background:#B9CDE0;"></div>
<div class="t" style="top:929.47px;font-size:23.5px;line-height:23.5px;color:#000;left:1446px;">Send to</div>
<svg style="left:1858px;top:932px" width="9" height="14" viewBox="0 0 9 14"><path d="M1 0 L8 7 L1 14Z" fill="#222"/></svg>
<div class="" style="left:1439px;top:962px;width:444px;height:2px;background:#D7D7D7;border-bottom:1px solid #fff;"></div>
<div class="t" style="top:978.17px;font-size:23.5px;line-height:23.5px;color:#000;left:1446px;">Cut</div>
<div class="t" style="top:1015.67px;font-size:23.5px;line-height:23.5px;color:#000;left:1446px;">Copy</div>
<div class="" style="left:1439px;top:1049px;width:444px;height:2px;background:#D7D7D7;border-bottom:1px solid #fff;"></div>
<div class="t" style="top:1063.67px;font-size:23.5px;line-height:23.5px;color:#000;left:1446px;">Create shortcut</div>
<div class="t" style="top:1101.67px;font-size:23.5px;line-height:23.5px;color:#000;left:1446px;">Delete</div>
<div class="t" style="top:1139.67px;font-size:23.5px;line-height:23.5px;color:#000;left:1446px;">Rename</div>
<div class="" style="left:1439px;top:1172px;width:444px;height:2px;background:#D7D7D7;border-bottom:1px solid #fff;"></div>
<div class="t" style="top:1188.07px;font-size:23.5px;line-height:23.5px;color:#000;left:1446px;">Properties</div>
<div class="" style="left:1878px;top:916px;width:20px;height:310px;background:#0A3B77;"></div>
<div class="" style="left:1882px;top:920px;width:617px;height:249px;background:rgba(0,0,0,.35);filter:blur(2px);"></div>
<div class="" style="left:1879px;top:916px;width:617px;height:250px;background:#F0F0F0;border:1px solid #A0A0A0;"></div>
<div class="" style="left:1931px;top:918px;width:2px;height:246px;background:#E2E2E2;border-right:1px solid #fff;"></div>
<div class="" style="left:1884px;top:961px;width:607px;height:41px;background:#D1E2F2;border:2px solid #7EB4EA;"></div>
<div class="" style="left:1931px;top:963px;width:1px;height:37px;background:#B9CDE0;"></div>
<svg style="left:1887px;top:925px" width="28" height="32" viewBox="0 0 28 32">
<path d="M1 1 L20 4 L20 28 L8 31Z" fill="url(#fback)"/><path d="M1 1 L8 6 L8 31 L1 26Z" fill="url(#ffront)"/>
<path d="M12 5 L12 28" stroke="#6a7aa8" stroke-width="3" stroke-dasharray="2 2"/></svg>
<div class="t" style="top:931.27px;font-size:23.5px;line-height:23.5px;color:#000;left:1940px;">Compressed (zipped) folder</div>
<svg style="left:1889px;top:970px" width="30" height="26" viewBox="0 0 30 26">
<defs><linearGradient id="dsk" x1="0" y1="1" x2="1" y2="0"><stop offset="0" stop-color="#0a3fc8"/><stop offset="1" stop-color="#7ab8ff"/></linearGradient></defs>
<rect x="1" y="1" width="28" height="20" fill="url(#dsk)" stroke="#3a4a6a" stroke-width="1.5"/><rect x="1" y="21" width="28" height="4" fill="#3a4a68"/></svg>
<div class="t" style="top:971.67px;font-size:23.5px;line-height:23.5px;color:#000;left:1940px;">Desktop (create shortcut)</div>
<svg style="left:1888px;top:1007px" width="32" height="32" viewBox="0 0 32 32">
<path d="M10 2 L20 2 L24 6 L24 22 L10 22Z" fill="#f4f4f4" stroke="#555"/><rect x="12" y="9" width="9" height="8" fill="#8cc0e8"/>
<path d="M2 22 L30 22 L26 30 L6 30Z" fill="#e02020"/><path d="M6 24 L14 24 L14 28 L8 28Z" fill="#20c020"/><path d="M16 24 L26 24 L24 28 L16 28Z" fill="#2050e0"/></svg>
<div class="t" style="top:1013.27px;font-size:23.5px;line-height:23.5px;color:#000;left:1940px;">Documents</div>
<svg style="left:1888px;top:1047px" width="32" height="32" viewBox="0 0 32 32">
<path d="M10 4 L26 1 L28 12 L14 14Z" fill="#eee" stroke="#777"/><path d="M2 16 Q4 10 14 12 L28 12 Q30 14 28 24 L6 28 Q2 26 2 16Z" fill="#c8c8c8" stroke="#666"/>
<rect x="8" y="16" width="10" height="4" fill="#5a9ad8"/></svg>
<div class="t" style="top:1052.67px;font-size:23.5px;line-height:23.5px;color:#000;left:1940px;">Fax recipient</div>
<svg style="left:1888px;top:1087px" width="32" height="32" viewBox="0 0 32 32">
<path d="M2 12 L16 2 L30 12 L30 30 L2 30Z" fill="#cfe4f8" stroke="#7a9ac8"/><path d="M6 6 L26 6 L26 18 L16 24 L6 18Z" fill="#f8d8a0"/>
<path d="M2 12 L16 22 L30 12" stroke="#7a9ac8" fill="none"/></svg>
<div class="t" style="top:1093.67px;font-size:23.5px;line-height:23.5px;color:#000;left:1940px;">Mail recipient</div>
<svg style="left:1888px;top:1128px" width="32" height="32" viewBox="0 0 32 32">
<circle cx="16" cy="8" r="7" fill="#ddd" stroke="#555"/><rect x="14" y="6" width="14" height="8" fill="#555"/>
<path d="M2 22 Q2 16 12 16 L28 16 Q30 20 28 26 L6 30 Q2 28 2 22Z" fill="#cfcfcf" stroke="#444" stroke-dasharray="2 1"/><circle cx="20" cy="23" r="2" fill="#3a3"/></svg>
<div class="t" style="top:1134.67px;font-size:23.5px;line-height:23.5px;color:#000;left:1940px;">DVD RW Drive (D:)</div>
<svg style="left:36px;top:1357px" width="84.6" height="89.3" viewBox="0 0 180 190"><path d="M108 96 L172 124 L150 142 L108 168Z" fill="#000" opacity=".13" filter="url(#blur4)"/><path d="M36 152 L108 168 L44 186Z" fill="#000" opacity=".10" filter="url(#blur4)"/><path d="M0 0 L102 16 Q107 17 107 24 L107 104 L115 111 L115 161 L107 167 L36 151 L0 142Z" fill="url(#fback)"/><path d="M0 0 L102 16 Q107 17 107 24 L107 104 L115 111 L115 161 L107 167 L36 151 L0 142Z" fill="url(#fbsh)"/><path d="M0 0 L102 16 Q107 17 107 24 L107 104 L115 111 L115 161 L107 167 L36 151 L0 142Z" fill="url(#fbtop)"/><rect x="109" y="116" width="5" height="40" fill="#fff"/><rect x="109" y="148" width="5" height="8" fill="#5a9ae8"/><path d="M0 0 L36 29 L36 116 L33 120 L33 185 L0 143Z" fill="url(#ffront)"/><path d="M0 0 L36 29 L36 116 L33 120 L33 185 L0 143Z" fill="url(#ffbot)"/><path d="M0 0 L36 29" stroke="#FFF8C8" stroke-width="1.2"/></svg>
<div class="t" style="top:1461.65px;font-size:22.5px;line-height:22.5px;color:#fff;left:-225px;width:600px;text-align:center;text-shadow:1px 1px 2px #000,0 0 2px rgba(0,0,0,.6);">images</div>
<div class="" style="left:2px;top:1636px;width:3000px;height:53px;background:linear-gradient(#6B7E97,#64778E);"></div>
<div class="" style="left:166px;top:1637px;width:77px;height:51px;background:linear-gradient(#9AA6B6,#A7B0BD);border:2px solid #EEF1F4;"></div>
<svg style="left:26px;top:1647px" width="30" height="30" viewBox="0 0 30 30" fill="#fff">
<path d="M1 4 L13 2.5 L13 14 L1 14Z"/><path d="M15 2.2 L29 0.5 L29 14 L15 14Z"/><path d="M1 16 L13 16 L13 27.5 L1 26Z"/><path d="M15 16 L29 16 L29 29.5 L15 27.8Z"/></svg>
<svg style="left:104px;top:1646px" width="34" height="34" viewBox="0 0 34 34">
<defs><linearGradient id="ieg" x1="0" y1="0" x2="0" y2="1"><stop offset="0" stop-color="#6fd6ff"/><stop offset="1" stop-color="#1f8fe0"/></linearGradient></defs>
<path d="M28 18 A10.5 10.5 0 1 0 25 25.5" stroke="url(#ieg)" stroke-width="6" fill="none"/>
<path d="M8 18 L30 18" stroke="#3ab4f0" stroke-width="5"/>
<path d="M6 31 Q-2 30 8 18 Q18 7 30 3 Q35 2 32 8" stroke="#F2BE1E" stroke-width="2.6" fill="none"/></svg>
<svg style="left:188px;top:1649px" width="32" height="30" viewBox="0 0 32 30">
<defs><linearGradient id="exf" x1="0" y1="0" x2="0" y2="1"><stop offset="0" stop-color="#FBE9A6"/><stop offset="1" stop-color="#EBCB62"/></linearGradient>
<linearGradient id="exb" x1="0" y1="0" x2="0" y2="1"><stop offset="0" stop-color="#bfe6ff"/><stop offset="1" stop-color="#4aa8e8"/></linearGradient></defs>
<path d="M1 6 Q1 3 4 3 L30 3 Q31 3 31 5 L31 26 Q31 27 30 27 L2 27 Q1 27 1 26Z" fill="url(#exf)" stroke="#D9B24E" stroke-width=".8"/>
<path d="M3 1 L12 1 L13 4 L3 4Z" fill="#fff"/><path d="M14 3 L22 3 L23 6 L14 6Z" fill="#fff"/><path d="M21 5 L30 5 L30 8 L21 8Z" fill="#fff"/>
<circle cx="6" cy="2.5" r="1.6" fill="#2fc03a"/><circle cx="16" cy="4.5" r="1.5" fill="#e33"/><circle cx="24" cy="6.5" r="1.5" fill="#2a8de8"/>
<path d="M3 29 L3 20 Q3 17 6 17 L26 17 Q29 17 29 20 L29 29 L23 29 L23 23 L9 23 L9 29Z" fill="url(#exb)"/></svg>
<svg style="left:272px;top:1646px" width="30" height="34" viewBox="0 0 30 34">
<rect x="4" y="4" width="9" height="28" rx="3" fill="#111"/><circle cx="8" cy="8" r="4" fill="#333" stroke="#777"/>
<rect x="13" y="10" width="14" height="14" fill="#5a7a2a" stroke="#2a3a10"/></svg>
<svg style="left:354px;top:1647px" width="32" height="32" viewBox="0 0 32 32">
<defs><radialGradient id="ffg" cx=".55" cy=".35" r=".6"><stop offset="0" stop-color="#3fb4f0"/><stop offset=".6" stop-color="#1f5fbf"/><stop offset="1" stop-color="#0d2f7a"/></radialGradient>
<linearGradient id="ffo" x1="0" y1="0" x2="1" y2="1"><stop offset="0" stop-color="#f57c1f"/><stop offset=".6" stop-color="#e4461c"/><stop offset="1" stop-color="#f3b81e"/></linearGradient></defs>
<circle cx="17" cy="15" r="13" fill="url(#ffg)"/>
<path d="M29.5 12 Q32 22 25 28 Q30 18 27 10Z" fill="#f6d23a"/>
<path d="M4 9 Q1 16 3 22 Q7 31 17 31 Q27 31 30 22 Q25 28 17 27 Q9 26 8 18 Q8 13 11 10 L15 11 L13 8 Q9 6 7 2 Q5 5 4 9Z" fill="url(#ffo)"/></svg>
<svg style="left:439px;top:1647px" width="24" height="32" viewBox="0 0 24 32">
<rect x="1" y="1" width="22" height="30" fill="#e8f0fa" stroke="#7aa0d0"/><rect x="3" y="3" width="18" height="7" fill="#cfe0f4"/>
<g fill="#5a90d8"><rect x="4" y="13" width="4" height="3"/><rect x="10" y="13" width="4" height="3"/><rect x="16" y="13" width="4" height="3"/><rect x="4" y="18" width="4" height="3"/><rect x="10" y="18" width="4" height="3"/><rect x="16" y="18" width="4" height="3"/><rect x="4" y="23" width="4" height="3"/><rect x="10" y="23" width="4" height="3"/><rect x="16" y="23" width="4" height="3"/></g></svg>
<svg style="left:519px;top:1646px" width="32" height="34" viewBox="0 0 32 34">
<ellipse cx="15" cy="26" rx="13" ry="6" fill="#2aa84a"/><path d="M8 6 Q14 2 22 4 L26 24 Q18 26 12 24Z" fill="#f4e8d8" stroke="#c8a888"/>
<path d="M12 18 L16 12 L20 16 L24 8" stroke="#e8702a" stroke-width="2" fill="none"/></svg>
<svg style="left:2572px;top:1657px" width="16" height="10" viewBox="0 0 16 10"><path d="M1 9 L8 1 L15 9Z" fill="#fff"/></svg>
<svg style="left:2612px;top:1648px" width="30" height="32" viewBox="0 0 30 32">
<rect x="1" y="1" width="28" height="21" fill="#8a8a8a" stroke="#222" stroke-width="1.5"/><path d="M8 5 L22 18 M22 5 L8 18" stroke="#f01010" stroke-width="3"/>
<rect x="2" y="25" width="10" height="6" rx="3" fill="#555"/><rect x="17" y="25" width="10" height="6" rx="3" fill="#555"/></svg>
<svg style="left:2669px;top:1648px" width="32" height="32" viewBox="0 0 32 32">
<path d="M2 1 L2 31" stroke="#222" stroke-width="4.5"/><path d="M2 1 L2 31" stroke="#fff" stroke-width="2.5"/><path d="M3 3 Q10 0 15 3 Q22 6 30 4 L28 16 Q22 20 15 16 Q9 13 3 16Z" fill="#f4f4f4" stroke="#222" stroke-width="1.2"/></svg>
<svg style="left:2714px;top:1648px;filter:drop-shadow(0 0 1px #000)" width="34" height="32" viewBox="0 0 34 32" fill="none" stroke="#fff" stroke-width="2">
<path d="M4 1 L4 8 M10 1 L10 8 M2 8 L12 8 L12 14 Q12 18 7 18 Q2 18 2 14Z M7 18 L7 31"/>
<rect x="16" y="3" width="16" height="28" rx="3" stroke-width="2.4"/><rect x="20" y="8" width="8" height="19" fill="#fff" stroke="none"/></svg>
<svg style="left:2762px;top:1651px" width="26" height="28" viewBox="0 0 26 28" fill="#fff" stroke="#222" stroke-width="1">
<rect x="1" y="21" width="4" height="6"/><rect x="7" y="15" width="4" height="12"/><rect x="13" y="9" width="4" height="18"/><rect x="19" y="3" width="4" height="24"/></svg>
<svg style="left:2810px;top:1648px" width="30" height="32" viewBox="0 0 30 32">
<path d="M1 11 L7 11 L15 2 L15 30 L7 21 L1 21Z" fill="#f4f4f4" stroke="#555" stroke-width=".8"/><path d="M21 11 Q24 16 21 21" stroke="#fff" stroke-width="1.6" fill="none"/></svg>
<div class="t" style="top:1653.82px;font-size:23.2px;line-height:23.2px;color:#fff;left:2878px;">8:50 AM</div>
</body></html>
